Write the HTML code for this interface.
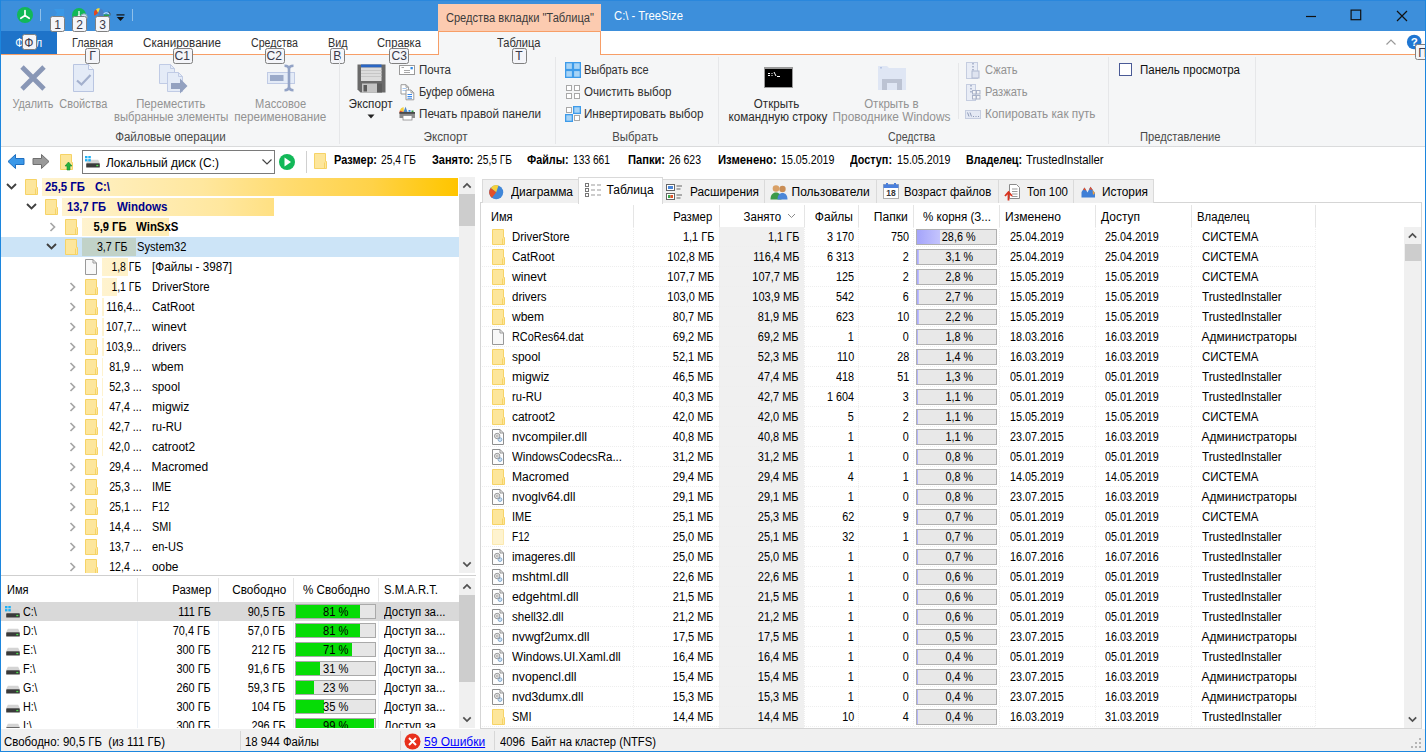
<!DOCTYPE html>
<html lang="ru"><head><meta charset="utf-8"><title>C:\ - TreeSize</title>
<style>
html,body{margin:0;padding:0;background:#fff;}
#app{position:relative;width:1426px;height:752px;overflow:hidden;font-family:"Liberation Sans", sans-serif;font-size:12px;background:#fff;}
#app div,#app svg,#app .t{position:absolute;box-sizing:border-box;}
.t{white-space:pre;line-height:16px;height:16px;}
</style></head>
<body>
<div id="app">
<div style="left:0px;top:0px;width:1426px;height:752px;background:#f0f0f0;"></div>
<div style="left:0px;top:0px;width:1426px;height:31px;background:#3d8fdb;"></div>
<div style="left:0px;top:0px;width:1426px;height:1px;background:#2a87dc;"></div>
<div style="left:1px;top:31px;width:1424px;height:24px;background:#fff;"></div>
<div style="left:1px;top:31px;width:56px;height:23px;background:#1e73c9;"></div>
<div style="left:1px;top:54px;width:1424px;height:1px;background:#f79e67;"></div>
<div style="left:1px;top:55px;width:1424px;height:91px;background:#f5f6f7;"></div>
<div style="left:1px;top:146px;width:1424px;height:1px;background:#dadbdc;"></div>
<div style="left:438px;top:4px;width:163px;height:28px;background:#fccbb0;"></div>
<div style="left:438px;top:31px;width:163px;height:24px;background:#f5f6f7;border:1px solid #f79e67;border-bottom:none;"></div>
<span class="t" style="top:10.00px;font-size:12px;color:#3b3b3b;left:439.60px;transform:scaleX(0.9262);transform-origin:50% 50%;">Средства вкладки &quot;Таблица&quot;</span>
<span class="t" style="top:8.00px;font-size:13px;color:#fff;left:614.00px;transform:scaleX(0.8683);transform-origin:0 50%;">C:\ - TreeSize</span>
<svg style="left:16px;top:6px" width="18" height="18" viewBox="0 0 18 18"><circle cx="9" cy="9" r="8" fill="#12b858"/><path d="M9 4.5V9.5M9 9.5L4.8 12.3M9 9.5L13.2 12.3" stroke="#fff" stroke-width="1.7" stroke-linecap="round" fill="none"/></svg>
<div style="left:40px;top:9px;width:1px;height:12px;background:#8fc0ea;"></div>
<div style="left:132px;top:9px;width:1px;height:12px;background:#8fc0ea;"></div>
<svg style="left:50px;top:8px" width="16" height="12" viewBox="0 0 16 12"><path d="M4 1H14V9H4L7 5Z" fill="#3a9ae8" opacity="0.85"/></svg>
<svg style="left:71px;top:7px" width="18" height="16" viewBox="0 0 18 16"><circle cx="8" cy="8" r="7" fill="#12b858"/><path d="M8 4V8.5M8 8.5L4.5 11M8 8.5L11.5 11" stroke="#fff" stroke-width="1.3" fill="none"/><circle cx="13" cy="10" r="3.2" fill="#cfe3f5" stroke="#8aa" stroke-width="1"/></svg>
<svg style="left:94px;top:7px" width="18" height="14" viewBox="0 0 18 14"><path d="M4 6L2 2.4A4.3 4.3 0 0 1 5.9 1.4Z" fill="#f6dc3a"/><path d="M4 6L0.7 8.8A4.3 4.3 0 0 1 2 2.4Z" fill="#e2481e"/><path d="M4.6 6.2L6.4 1.6A4.8 4.8 0 0 1 8.8 9H4.6Z" fill="#4b7fc4"/><path d="M9.2 7.4A3.4 3.4 0 0 1 15.8 7.4Z" fill="#2f8ae6"/><path d="M9.2 7.4H15.8A3.4 3.4 0 0 1 9.2 7.4Z" fill="#2e9e44"/><path d="M9.5 6.8C11.5 5.2 14 5.5 15.5 7.5" stroke="#fff" stroke-width="0.9" fill="none"/><path d="M14.5 4.6A3.6 3.6 0 0 1 16 8.5" stroke="#555" stroke-width="1" fill="none"/></svg>
<svg style="left:116px;top:13.5px" width="9" height="8" viewBox="0 0 9 8"><rect x="0.5" y="0.3" width="8" height="1.2" fill="#111"/><path d="M0.8 3H8.2L4.5 7Z" fill="#111"/></svg>
<div style="left:50px;top:16.2px;width:15.4px;height:16.3px;background:#f4f5f9;border:1px solid #808080;border-radius:2.5px;"></div>
<span class="t" style="top:16.50px;font-size:13px;color:#3a3a4a;left:54.08px;transform:scaleX(0.9300);transform-origin:50% 50%;">1</span>
<div style="left:72px;top:16.2px;width:15.4px;height:16.3px;background:#f4f5f9;border:1px solid #808080;border-radius:2.5px;"></div>
<span class="t" style="top:16.50px;font-size:13px;color:#3a3a4a;left:76.08px;transform:scaleX(0.9300);transform-origin:50% 50%;">2</span>
<div style="left:94.5px;top:16.2px;width:15.4px;height:16.3px;background:#f4f5f9;border:1px solid #808080;border-radius:2.5px;"></div>
<span class="t" style="top:16.50px;font-size:13px;color:#3a3a4a;left:98.58px;transform:scaleX(0.9300);transform-origin:50% 50%;">3</span>
<svg style="left:1305px;top:10px" width="12" height="12" viewBox="0 0 12 12"><path d="M1 6.5H11" stroke="#111" stroke-width="1.2"/></svg>
<svg style="left:1350px;top:9px" width="12" height="12" viewBox="0 0 12 12"><rect x="1.1" y="1.1" width="9.6" height="9.6" fill="none" stroke="#111" stroke-width="1.2"/></svg>
<svg style="left:1396px;top:10px" width="12" height="12" viewBox="0 0 12 12"><path d="M1 1L11 11M11 1L1 11" stroke="#111" stroke-width="1.2"/></svg>
<span class="t" style="top:35.00px;font-size:12px;color:#fff;left:14.24px;transform:scaleX(0.9148);transform-origin:50% 50%;">Файл</span>
<span class="t" style="top:35.00px;font-size:12px;color:#303030;left:71.60px;transform:scaleX(0.8974);transform-origin:0 50%;">Главная</span>
<span class="t" style="top:35.00px;font-size:12px;color:#303030;left:142.50px;transform:scaleX(0.9695);transform-origin:0 50%;">Сканирование</span>
<span class="t" style="top:35.00px;font-size:12px;color:#303030;left:250.50px;transform:scaleX(0.8839);transform-origin:0 50%;">Средства</span>
<span class="t" style="top:35.00px;font-size:12px;color:#303030;left:327.50px;transform:scaleX(0.8978);transform-origin:0 50%;">Вид</span>
<span class="t" style="top:35.00px;font-size:12px;color:#303030;left:376.50px;transform:scaleX(0.9346);transform-origin:0 50%;">Справка</span>
<span class="t" style="top:35.00px;font-size:12px;color:#303030;left:497.00px;transform:scaleX(0.9243);transform-origin:0 50%;">Таблица</span>
<div style="left:21.5px;top:34.2px;width:15.4px;height:16.3px;background:#f4f5f9;border:1px solid #808080;border-radius:2.5px;"></div>
<span class="t" style="top:34.50px;font-size:13px;color:#3a3a4a;left:24.25px;transform:scaleX(0.9300);transform-origin:50% 50%;">Ф</span>
<div style="left:84.5px;top:47.7px;width:15.4px;height:16.3px;background:#f4f5f9;border:1px solid #808080;border-radius:2.5px;"></div>
<span class="t" style="top:48.00px;font-size:13px;color:#3a3a4a;left:88.68px;transform:scaleX(0.9300);transform-origin:50% 50%;">Г</span>
<div style="left:172.5px;top:47.7px;width:20.4px;height:16.3px;background:#f4f5f9;border:1px solid #808080;border-radius:2.5px;"></div>
<span class="t" style="top:48.00px;font-size:13px;color:#3a3a4a;left:174.39px;transform:scaleX(0.9300);transform-origin:50% 50%;">С1</span>
<div style="left:264.5px;top:47.7px;width:20.4px;height:16.3px;background:#f4f5f9;border:1px solid #808080;border-radius:2.5px;"></div>
<span class="t" style="top:48.00px;font-size:13px;color:#3a3a4a;left:266.39px;transform:scaleX(0.9300);transform-origin:50% 50%;">С2</span>
<div style="left:329.5px;top:47.7px;width:15.4px;height:16.3px;background:#f4f5f9;border:1px solid #808080;border-radius:2.5px;"></div>
<span class="t" style="top:48.00px;font-size:13px;color:#3a3a4a;left:332.86px;transform:scaleX(0.9300);transform-origin:50% 50%;">В</span>
<div style="left:389px;top:47.7px;width:20.4px;height:16.3px;background:#f4f5f9;border:1px solid #808080;border-radius:2.5px;"></div>
<span class="t" style="top:48.00px;font-size:13px;color:#3a3a4a;left:390.89px;transform:scaleX(0.9300);transform-origin:50% 50%;">С3</span>
<div style="left:511.5px;top:47.7px;width:15.4px;height:16.3px;background:#f4f5f9;border:1px solid #808080;border-radius:2.5px;"></div>
<span class="t" style="top:48.00px;font-size:13px;color:#3a3a4a;left:515.22px;transform:scaleX(0.9300);transform-origin:50% 50%;">Т</span>
<svg style="left:1385px;top:38px" width="12" height="8" viewBox="0 0 12 8"><path d="M1.5 6.5L6 2L10.5 6.5" stroke="#9a9a9a" stroke-width="1.2" fill="none"/></svg>
<svg style="left:1406px;top:33.5px" width="17" height="17" viewBox="0 0 17 17"><circle cx="8.2" cy="8" r="7.3" fill="#1f76d2"/><text x="8.2" y="12.2" font-size="11.5" font-weight="bold" fill="#fff" text-anchor="middle" font-family="Liberation Sans, sans-serif">?</text></svg>
<div style="left:1415px;top:44.2px;width:15.4px;height:16.3px;background:#f4f5f9;border:1px solid #808080;border-radius:2.5px;"></div>
<span class="t" style="top:44.50px;font-size:13px;color:#3a3a4a;left:1418.03px;transform:scaleX(0.9300);transform-origin:50% 50%;">П</span>
<div style="left:339px;top:57px;width:1px;height:87px;background:#e6e7e9;"></div>
<div style="left:555px;top:57px;width:1px;height:87px;background:#e6e7e9;"></div>
<div style="left:718px;top:57px;width:1px;height:87px;background:#e6e7e9;"></div>
<div style="left:1108px;top:57px;width:1px;height:87px;background:#e6e7e9;"></div>
<div style="left:1255px;top:57px;width:1px;height:87px;background:#e6e7e9;"></div>
<div style="left:958px;top:63px;width:1px;height:56px;background:#e6e7e9;"></div>
<span class="t" style="top:129.00px;font-size:12px;color:#4a4a4a;left:112.60px;transform:scaleX(0.9626);transform-origin:50% 50%;">Файловые операции</span>
<span class="t" style="top:129.00px;font-size:12px;color:#4a4a4a;left:423.45px;transform:scaleX(0.9757);transform-origin:50% 50%;">Экспорт</span>
<span class="t" style="top:129.00px;font-size:12px;color:#4a4a4a;left:610.83px;transform:scaleX(0.9515);transform-origin:50% 50%;">Выбрать</span>
<span class="t" style="top:129.00px;font-size:12px;color:#4a4a4a;left:884.91px;transform:scaleX(0.8839);transform-origin:50% 50%;">Средства</span>
<span class="t" style="top:129.00px;font-size:12px;color:#4a4a4a;left:1137.03px;transform:scaleX(0.9303);transform-origin:50% 50%;">Представление</span>
<svg style="left:19px;top:64px" width="28" height="28" viewBox="0 0 28 28"><path d="M3 3L25 25M25 3L3 25" stroke="#8997b6" stroke-width="4.8"/></svg>
<span class="t" style="top:96.30px;font-size:12px;color:#929292;left:10.09px;transform:scaleX(0.8946);transform-origin:50% 50%;">Удалить</span>
<svg style="left:71px;top:63px" width="25" height="30" viewBox="0 0 25 30"><path d="M2.5 1.5H17.5L22.5 6.5V28.5H2.5Z" fill="#e4ebf7" stroke="#b9c5e1" stroke-width="1"/><path d="M17.5 1.5V6.5H22.5" fill="#f4f6fb" stroke="#b9c5e1" stroke-width="1"/><path d="M6 17.5L10.5 21.5L19.5 12" stroke="#a3b0cd" stroke-width="2.2" fill="none"/></svg>
<span class="t" style="top:96.30px;font-size:12px;color:#929292;left:57.15px;transform:scaleX(0.9108);transform-origin:50% 50%;">Свойства</span>
<svg style="left:158px;top:63px" width="32" height="32" viewBox="0 0 32 32"><path d="M1.5 1.5H12.5L16.5 5.5V20.5H1.5Z" fill="#e4ebf7" stroke="#c0cbe5"/><path d="M12.5 1.5V5.5H16.5" fill="none" stroke="#c0cbe5"/><path d="M9.5 9.5H20.5L24.5 13.5V28.5H9.5Z" fill="#e4ebf7" stroke="#c0cbe5"/><path d="M20.5 9.5V13.5H24.5" fill="none" stroke="#c0cbe5"/><path d="M13 20H22V15.5L29.5 23L22 30.5V26H13Z" fill="#93a1c0"/></svg>
<span class="t" style="top:96.30px;font-size:12px;color:#929292;left:134.23px;transform:scaleX(0.9384);transform-origin:50% 50%;">Переместить</span>
<span class="t" style="top:109.30px;font-size:12px;color:#929292;left:109.84px;transform:scaleX(0.9360);transform-origin:50% 50%;">выбранные элементы</span>
<svg style="left:265px;top:63px" width="32" height="30" viewBox="0 0 32 30"><rect x="2.5" y="9.5" width="27" height="11" fill="#e4ebf7" stroke="#c0cbe5"/><rect x="5" y="12" width="13.5" height="6" fill="#9baac9"/><path d="M19.5 2.8C22.5 2.8 24 4 24 6.5V23.5C24 26 22.5 27.2 19.5 27.2M28.5 2.8C25.5 2.8 24 4 24 6.5M24 23.5C24 26 25.5 27.2 28.5 27.2" stroke="#93a3c6" stroke-width="2.6" fill="none"/></svg>
<span class="t" style="top:96.30px;font-size:12px;color:#929292;left:252.90px;transform:scaleX(0.9239);transform-origin:50% 50%;">Массовое</span>
<span class="t" style="top:109.30px;font-size:12px;color:#929292;left:233.31px;transform:scaleX(0.9748);transform-origin:50% 50%;">переименование</span>
<svg style="left:356.5px;top:63.7px" width="29" height="29" viewBox="0 0 29 29"><path d="M0.5 0.5H28.5V28.5H3.5L0.5 25.5Z" fill="#6a6a6a"/><rect x="4" y="0.5" width="20.5" height="3" fill="#2a66c4"/><rect x="4" y="3.5" width="20.5" height="13.5" fill="#dcdcdc"/><path d="M4 6.5H24.5M4 9.5H24.5M4 12.5H24.5" stroke="#c6c6c6" stroke-width="1"/><rect x="5" y="19.5" width="15" height="9" fill="#c4c4c4"/><rect x="6.5" y="21" width="3.5" height="6.5" fill="#5a5a5a"/><rect x="20" y="19.5" width="5" height="9" fill="#5c5c5c"/></svg>
<span class="t" style="top:96.30px;font-size:12px;color:#2b2b2b;left:348.45px;transform:scaleX(0.9757);transform-origin:50% 50%;">Экспорт</span>
<svg style="left:367px;top:114px" width="8" height="5" viewBox="0 0 8 5"><path d="M0.5 0.5H7.5L4 4.5Z" fill="#222"/></svg>
<svg style="left:399px;top:65px" width="17" height="11" viewBox="0 0 17 11"><rect x="0.5" y="0.5" width="15" height="9" fill="#fff" stroke="#9a9a9a"/><path d="M2.5 2.5H5M5 5.5H11M5 7.5H11" stroke="#a8a8a8"/><rect x="11.5" y="2" width="2.3" height="2.3" fill="#2f8ae6"/></svg>
<span class="t" style="top:62.00px;font-size:12px;color:#303030;left:418.50px;transform:scaleX(0.9602);transform-origin:0 50%;">Почта</span>
<svg style="left:399.5px;top:83.7px" width="16" height="17" viewBox="0 0 16 17"><path d="M1 0.7H6L8.5 3.2V10H1Z" fill="#fff" stroke="#9a9a9a"/><path d="M6 0.7V3.2H8.5" fill="none" stroke="#9a9a9a"/><path d="M2.5 4.5H6.5M2.5 6.5H6.5" stroke="#a9c8ee"/><path d="M6 6H11L13.8 8.8V15.8H6Z" fill="#fff" stroke="#9a9a9a"/><path d="M11 6V8.8H13.8" fill="none" stroke="#9a9a9a"/><path d="M7.5 10.5H12M7.5 12.5H12M7.5 14.2H12" stroke="#3f8ae8"/></svg>
<span class="t" style="top:84.00px;font-size:12px;color:#303030;left:418.50px;transform:scaleX(0.9258);transform-origin:0 50%;">Буфер обмена</span>
<svg style="left:399px;top:106px" width="17" height="15" viewBox="0 0 17 15"><path d="M4.5 1A4.8 4.8 0 0 0 0.8 4.5L5 6Z" fill="#f4d03f"/><path d="M0.8 4.5A4.8 4.8 0 0 0 2 9.5L5 6Z" fill="#e2502a"/><path d="M6.5 0.8L9.5 8.5H3.5Z" fill="#4c86c6"/><rect x="0.5" y="6.5" width="15.5" height="5.5" fill="#8c8c8c"/><rect x="0.5" y="6" width="15.5" height="1.8" fill="#4a4a4a"/><rect x="9.5" y="4" width="2" height="1.8" fill="#2f8ae6"/><rect x="12.5" y="4.5" width="2" height="1.5" fill="#2e9e44"/><rect x="4" y="9.5" width="9" height="4.5" fill="#fff" stroke="#8a8a8a" stroke-width="0.8"/></svg>
<span class="t" style="top:106.00px;font-size:12px;color:#303030;left:418.50px;transform:scaleX(0.9742);transform-origin:0 50%;">Печать правой панели</span>
<svg style="left:565px;top:62px" width="16" height="16" viewBox="0 0 16 16"><rect x="0" y="0" width="16" height="16" fill="#3d9bea"/><rect x="1.3" y="1.3" width="5.6" height="5.6" fill="#a8d4f6"/><rect x="9.1" y="1.3" width="5.6" height="5.6" fill="#a8d4f6"/><rect x="1.3" y="9.1" width="5.6" height="5.6" fill="#a8d4f6"/><rect x="9.1" y="9.1" width="5.6" height="5.6" fill="#a8d4f6"/></svg>
<span class="t" style="top:62.00px;font-size:12px;color:#303030;left:584.30px;transform:scaleX(0.9137);transform-origin:0 50%;">Выбрать все</span>
<svg style="left:565px;top:84px" width="16" height="16" viewBox="0 0 16 16"><g fill="#fff" stroke="#a8a8a8"><rect x="1.5" y="1.5" width="5" height="5"/><rect x="9.5" y="1.5" width="5" height="5"/><rect x="1.5" y="9.5" width="5" height="5"/><rect x="9.5" y="9.5" width="5" height="5"/></g></svg>
<span class="t" style="top:84.00px;font-size:12px;color:#303030;left:584.30px;transform:scaleX(0.9637);transform-origin:0 50%;">Очистить выбор</span>
<svg style="left:565px;top:106px" width="16" height="16" viewBox="0 0 16 16"><g fill="#fff" stroke="#a8a8a8"><rect x="1.5" y="1.5" width="5" height="5"/><rect x="9.5" y="9.5" width="5" height="5"/></g><rect x="8" y="0" width="8" height="8" fill="#3d9bea"/><rect x="9.3" y="1.3" width="5.4" height="5.4" fill="#a8d4f6"/><rect x="0" y="8" width="8" height="8" fill="#3d9bea"/><rect x="1.3" y="9.3" width="5.4" height="5.4" fill="#a8d4f6"/></svg>
<span class="t" style="top:106.00px;font-size:12px;color:#303030;left:584.30px;transform:scaleX(0.9709);transform-origin:0 50%;">Инвертировать выбор</span>
<svg style="left:764px;top:67px" width="29" height="21" viewBox="0 0 29 21"><rect x="0" y="0" width="29" height="21" fill="#9a9a9a"/><rect x="1" y="2" width="27" height="18" fill="#000"/><path d="M4 6.5H6M4 8.5H6M7.5 6.5H8.5M7.5 8.5H8.5M10 5L12 9M13 9.5H16" stroke="#fff" stroke-width="1"/></svg>
<span class="t" style="top:96.30px;font-size:12px;color:#2b2b2b;left:753.43px;transform:scaleX(0.9652);transform-origin:50% 50%;">Открыть</span>
<span class="t" style="top:109.30px;font-size:12px;color:#2b2b2b;left:726.59px;transform:scaleX(0.9724);transform-origin:50% 50%;">командную строку</span>
<svg style="left:877px;top:65px" width="30" height="26" viewBox="0 0 30 26"><path d="M1 1H10L12 3H29V25H1Z" fill="#dfe6f4"/><rect x="3" y="2" width="2" height="1.5" fill="#b8c6e4"/><path d="M5 25V14H25V25H20V18H10V25Z" fill="#bcc3d3"/></svg>
<span class="t" style="top:96.30px;font-size:12px;color:#929292;left:863.33px;transform:scaleX(0.9588);transform-origin:50% 50%;">Открыть в</span>
<span class="t" style="top:109.30px;font-size:12px;color:#929292;left:832.08px;transform:scaleX(0.9913);transform-origin:50% 50%;">Проводнике Windows</span>
<svg style="left:966px;top:62px" width="14" height="17" viewBox="0 0 14 17"><rect x="0.5" y="0.5" width="11" height="16" fill="#e9edf6" stroke="#c5cde0"/><path d="M7 1V12" stroke="#b0b9d0" stroke-width="2" stroke-dasharray="1.5 1.5"/><rect x="6" y="9" width="7" height="7" fill="#dfe4f0" stroke="#b0b9d0"/></svg>
<span class="t" style="top:62.00px;font-size:12px;color:#929292;left:984.50px;transform:scaleX(0.9253);transform-origin:0 50%;">Сжать</span>
<svg style="left:966px;top:84px" width="15" height="17" viewBox="0 0 15 17"><rect x="0.5" y="0.5" width="9" height="16" fill="#e9edf6" stroke="#c5cde0"/><path d="M5 1V9" stroke="#b0b9d0" stroke-width="2" stroke-dasharray="1.5 1.5"/><rect x="6.5" y="6.5" width="3.5" height="3.5" fill="#f5f6f7" stroke="#aab3c8"/><rect x="10.5" y="6.5" width="3.5" height="3.5" fill="#f5f6f7" stroke="#aab3c8"/><rect x="6.5" y="11.5" width="3.5" height="3.5" fill="#f5f6f7" stroke="#aab3c8"/><rect x="10.5" y="11.5" width="3.5" height="3.5" fill="#f5f6f7" stroke="#aab3c8"/></svg>
<span class="t" style="top:84.00px;font-size:12px;color:#929292;left:984.50px;transform:scaleX(0.9271);transform-origin:0 50%;">Разжать</span>
<svg style="left:965px;top:110px" width="16" height="9" viewBox="0 0 16 9"><rect x="0.5" y="0.5" width="15" height="8" fill="#e4e9f4" stroke="#c5cde0"/><path d="M2.5 2.5L4 6.5M5 2.5L6.5 6.5M8 6.5H9M10.5 6.5H11.5M13 6.5H14" stroke="#8f9bb8" stroke-width="1"/></svg>
<span class="t" style="top:106.00px;font-size:12px;color:#929292;left:984.50px;transform:scaleX(0.9781);transform-origin:0 50%;">Копировать как путь</span>
<div style="left:1119px;top:63px;width:13px;height:13px;background:#fff;border:1px solid #4a5a96;"></div>
<span class="t" style="top:62.00px;font-size:12px;color:#111;left:1139.50px;transform:scaleX(0.9602);transform-origin:0 50%;">Панель просмотра</span>
<div style="left:1px;top:147px;width:1424px;height:582px;background:#fff;"></div>
<svg style="left:7px;top:153px" width="18" height="17" viewBox="0 0 18 17"><path d="M1 8.5L8.5 1.5V5.5H17V11.5H8.5V15.5Z" fill="#3b98e8" stroke="#1f6fc0" stroke-width="1"/></svg>
<svg style="left:32px;top:153px" width="18" height="17" viewBox="0 0 18 17"><path d="M17 8.5L9.5 1.5V5.5H1V11.5H9.5V15.5Z" fill="#9a9a9a" stroke="#6f6f6f" stroke-width="1"/></svg>
<svg style="left:60px;top:154px" width="13" height="17" viewBox="0 0 13 17"><path d="M0.5 0.5H11.5V8.5H12.5V15.5H0.5Z" fill="#fde69b" stroke="#f6d366"/><path d="M8.5 8L12 12H10V16H7V12H5Z" fill="#27b13c" stroke="#1a8a2b" stroke-width="0.6"/></svg>
<div style="left:82px;top:150px;width:193px;height:24px;background:#fff;border:1px solid #7a7a7a;"></div>
<svg style="left:85px;top:156px" width="16" height="12" viewBox="0 0 16 12"><path d="M1.2 7.3L2.8 3.8H13.2L14.8 7.3Z" fill="#d4d4d4"/><rect x="1.2" y="7.3" width="13.6" height="4.2" rx="0.6" fill="#3a3a3a"/><rect x="11.3" y="8.9" width="2" height="1.3" fill="#4ee04e"/><g fill="#1eb0f5"><rect x="0" y="0" width="2.5" height="2.3"/><rect x="3.3" y="0" width="2.5" height="2.3"/><rect x="0" y="3.1" width="2.5" height="2.3"/><rect x="3.3" y="3.1" width="2.5" height="2.3"/></g></svg>
<span class="t" style="top:154.50px;font-size:12px;color:#000;left:106.00px;transform:scaleX(0.9950);transform-origin:0 50%;">Локальный диск (C:)</span>
<svg style="left:261px;top:158px" width="12" height="8" viewBox="0 0 12 8"><path d="M1.5 1.5L6 6L10.5 1.5" stroke="#444" stroke-width="1.2" fill="none"/></svg>
<svg style="left:278px;top:153px" width="18" height="18" viewBox="0 0 18 18"><circle cx="9" cy="9" r="8" fill="#12b858"/><path d="M6.5 4.5L13 9L6.5 13.5Z" fill="#fff"/></svg>
<div style="left:306px;top:151px;width:1px;height:22px;background:#d0d0d0;"></div>
<svg style="left:314px;top:153px" width="13" height="16" viewBox="0 0 13 16"><path d="M0.5 0.5H11.5V8.5H12.5V15.5H0.5Z" fill="#fde69b" stroke="#f6d366"/><path d="M10.5 9.5V15" stroke="#f6d366"/></svg>
<span class="t" style="top:152.30px;font-size:12px;color:#000;font-weight:bold;left:334.20px;transform:scaleX(0.9107);transform-origin:0 50%;">Размер:</span>
<span class="t" style="top:152.30px;font-size:12px;color:#000;left:381.40px;transform:scaleX(0.8524);transform-origin:0 50%;">25,4 ГБ</span>
<span class="t" style="top:152.30px;font-size:12px;color:#000;font-weight:bold;left:431.80px;transform:scaleX(0.9121);transform-origin:0 50%;">Занято:</span>
<span class="t" style="top:152.30px;font-size:12px;color:#000;left:477.00px;transform:scaleX(0.8524);transform-origin:0 50%;">25,5 ГБ</span>
<span class="t" style="top:152.30px;font-size:12px;color:#000;font-weight:bold;left:527.20px;transform:scaleX(0.8988);transform-origin:0 50%;">Файлы:</span>
<span class="t" style="top:152.30px;font-size:12px;color:#000;left:572.70px;transform:scaleX(0.8527);transform-origin:0 50%;">133 661</span>
<span class="t" style="top:152.30px;font-size:12px;color:#000;font-weight:bold;left:627.50px;transform:scaleX(0.9264);transform-origin:0 50%;">Папки:</span>
<span class="t" style="top:152.30px;font-size:12px;color:#000;left:668.60px;transform:scaleX(0.8719);transform-origin:0 50%;">26 623</span>
<span class="t" style="top:152.30px;font-size:12px;color:#000;font-weight:bold;left:717.70px;transform:scaleX(0.9416);transform-origin:0 50%;">Изменено:</span>
<span class="t" style="top:152.30px;font-size:12px;color:#000;left:780.60px;transform:scaleX(0.8907);transform-origin:0 50%;">15.05.2019</span>
<span class="t" style="top:152.30px;font-size:12px;color:#000;font-weight:bold;left:850.20px;transform:scaleX(0.9005);transform-origin:0 50%;">Доступ:</span>
<span class="t" style="top:152.30px;font-size:12px;color:#000;left:896.60px;transform:scaleX(0.8907);transform-origin:0 50%;">15.05.2019</span>
<span class="t" style="top:152.30px;font-size:12px;color:#000;font-weight:bold;left:966.20px;transform:scaleX(0.8922);transform-origin:0 50%;">Владелец:</span>
<span class="t" style="top:152.30px;font-size:12px;color:#000;left:1026.00px;transform:scaleX(0.9433);transform-origin:0 50%;">TrustedInstaller</span>
<div style="left:1px;top:177px;width:458px;height:396px;background:#fff;overflow:hidden">
<div style="left:41px;top:1px;width:416px;height:18px;background:linear-gradient(90deg,#fff3cf 0px,#ffe79e 160px,#ffdb6e 250px,#ffd248 330px,#ffc80a 400px,#ffc400 416px) no-repeat;background-size:416px 18px;"></div>
<svg style="left:5px;top:5.5px" width="11" height="7" viewBox="0 0 11 7"><path d="M1 1L5.5 5.5L10 1" stroke="#404040" stroke-width="1.9" fill="none"/></svg>
<svg style="left:23.7px;top:2px" width="13" height="16" viewBox="0 0 13 16"><path d="M0.5 0.5H11.5V8.5H12.5V15.5H0.5Z" fill="#fde69b" stroke="#f6d366"/><path d="M10.5 9.5V15" stroke="#f6d366"/></svg>
<span class="t" style="top:1.50px;font-size:12px;color:#00008b;font-weight:bold;left:44.00px;transform:scaleX(0.9496);transform-origin:0 50%;">25,5 ГБ</span>
<span class="t" style="top:1.50px;font-size:12px;color:#00008b;font-weight:bold;left:94.00px;transform:scaleX(0.9375);transform-origin:0 50%;">C:\</span>
<div style="left:61px;top:21px;width:212px;height:18px;background:linear-gradient(90deg,#fff3cf 0px,#ffe79e 160px,#ffdb6e 250px,#ffd248 330px,#ffc80a 400px,#ffc400 416px) no-repeat;background-size:416px 18px;"></div>
<svg style="left:25px;top:25.5px" width="11" height="7" viewBox="0 0 11 7"><path d="M1 1L5.5 5.5L10 1" stroke="#404040" stroke-width="1.9" fill="none"/></svg>
<svg style="left:43.7px;top:22px" width="13" height="16" viewBox="0 0 13 16"><path d="M0.5 0.5H11.5V8.5H12.5V15.5H0.5Z" fill="#fde69b" stroke="#f6d366"/><path d="M10.5 9.5V15" stroke="#f6d366"/></svg>
<span class="t" style="top:21.50px;font-size:12px;color:#00008b;font-weight:bold;left:65.50px;transform:scaleX(0.9258);transform-origin:0 50%;">13,7 ГБ</span>
<span class="t" style="top:21.50px;font-size:12px;color:#00008b;font-weight:bold;left:115.50px;transform:scaleX(0.9608);transform-origin:0 50%;">Windows</span>
<div style="left:81px;top:41px;width:87px;height:18px;background:linear-gradient(90deg,#fff3cf 0px,#ffe79e 160px,#ffdb6e 250px,#ffd248 330px,#ffc80a 400px,#ffc400 416px) no-repeat;background-size:416px 18px;"></div>
<svg style="left:48px;top:44.5px" width="7" height="10" viewBox="0 0 7 10"><path d="M1.5 1L5.5 5L1.5 9" stroke="#a6a6a6" stroke-width="1.7" fill="none"/></svg>
<svg style="left:63.7px;top:42px" width="13" height="16" viewBox="0 0 13 16"><path d="M0.5 0.5H11.5V8.5H12.5V15.5H0.5Z" fill="#fde69b" stroke="#f6d366"/><path d="M10.5 9.5V15" stroke="#f6d366"/></svg>
<span class="t" style="top:41.50px;font-size:12px;color:#000;font-weight:bold;left:89.85px;transform:scaleX(0.9308);transform-origin:100% 50%;">5,9 ГБ</span>
<span class="t" style="top:41.50px;font-size:12px;color:#000;font-weight:bold;left:135.00px;transform:scaleX(0.9534);transform-origin:0 50%;">WinSxS</span>
<div style="left:0px;top:60px;width:458px;height:20px;background:#cce4f7;"></div>
<div style="left:81px;top:61px;width:54px;height:18px;background:#c1d2c8;"></div>
<svg style="left:45px;top:65.5px" width="11" height="7" viewBox="0 0 11 7"><path d="M1 1L5.5 5.5L10 1" stroke="#404040" stroke-width="1.9" fill="none"/></svg>
<svg style="left:63.7px;top:62px" width="13" height="16" viewBox="0 0 13 16"><path d="M0.5 0.5H11.5V8.5H12.5V15.5H0.5Z" fill="#fde69b" stroke="#f6d366"/><path d="M10.5 9.5V15" stroke="#f6d366"/></svg>
<span class="t" style="top:61.50px;font-size:12px;color:#000;left:91.91px;transform:scaleX(0.8869);transform-origin:100% 50%;">3,7 ГБ</span>
<span class="t" style="top:61.50px;font-size:12px;color:#000;left:136.00px;transform:scaleX(0.9277);transform-origin:0 50%;">System32</span>
<div style="left:101px;top:81px;width:26px;height:18px;background:linear-gradient(90deg,#fff3cf 0px,#ffe79e 160px,#ffdb6e 250px,#ffd248 330px,#ffc80a 400px,#ffc400 416px) no-repeat;background-size:416px 18px;"></div>
<svg style="left:83.7px;top:82px" width="13" height="16" viewBox="0 0 13 16"><path d="M0.5 0.5H8L11.5 4V15.5H0.5Z" fill="#f8f8f8" stroke="#999"/><path d="M8 0.5V4H11.5" fill="none" stroke="#999"/></svg>
<span class="t" style="top:81.50px;font-size:12px;color:#000;left:106.11px;transform:scaleX(0.8723);transform-origin:100% 50%;">1,8 ГБ</span>
<span class="t" style="top:81.50px;font-size:12px;color:#000;left:150.50px;transform:scaleX(0.9738);transform-origin:0 50%;">[Файлы - 3987]</span>
<div style="left:101px;top:101px;width:15px;height:18px;background:linear-gradient(90deg,#fff3cf 0px,#ffe79e 160px,#ffdb6e 250px,#ffd248 330px,#ffc80a 400px,#ffc400 416px) no-repeat;background-size:416px 18px;"></div>
<svg style="left:68px;top:104.5px" width="7" height="10" viewBox="0 0 7 10"><path d="M1.5 1L5.5 5L1.5 9" stroke="#a6a6a6" stroke-width="1.7" fill="none"/></svg>
<svg style="left:83.7px;top:102px" width="13" height="16" viewBox="0 0 13 16"><path d="M0.5 0.5H11.5V8.5H12.5V15.5H0.5Z" fill="#fde69b" stroke="#f6d366"/><path d="M10.5 9.5V15" stroke="#f6d366"/></svg>
<span class="t" style="top:101.50px;font-size:12px;color:#000;left:106.11px;transform:scaleX(0.8723);transform-origin:100% 50%;">1,1 ГБ</span>
<span class="t" style="top:101.50px;font-size:12px;color:#000;left:150.50px;transform:scaleX(0.9475);transform-origin:0 50%;">DriverStore</span>
<div style="left:101px;top:121px;width:1.5px;height:18px;background:linear-gradient(90deg,#fff3cf 0px,#ffe79e 160px,#ffdb6e 250px,#ffd248 330px,#ffc80a 400px,#ffc400 416px) no-repeat;background-size:416px 18px;"></div>
<svg style="left:68px;top:124.5px" width="7" height="10" viewBox="0 0 7 10"><path d="M1.5 1L5.5 5L1.5 9" stroke="#a6a6a6" stroke-width="1.7" fill="none"/></svg>
<svg style="left:83.7px;top:122px" width="13" height="16" viewBox="0 0 13 16"><path d="M0.5 0.5H11.5V8.5H12.5V15.5H0.5Z" fill="#fde69b" stroke="#f6d366"/><path d="M10.5 9.5V15" stroke="#f6d366"/></svg>
<span class="t" style="top:121.50px;font-size:12px;color:#000;left:101.36px;transform:scaleX(0.8942);transform-origin:100% 50%;">116,4...</span>
<span class="t" style="top:121.50px;font-size:12px;color:#000;left:150.50px;transform:scaleX(0.9652);transform-origin:0 50%;">CatRoot</span>
<div style="left:101px;top:141px;width:1.5px;height:18px;background:linear-gradient(90deg,#fff3cf 0px,#ffe79e 160px,#ffdb6e 250px,#ffd248 330px,#ffc80a 400px,#ffc400 416px) no-repeat;background-size:416px 18px;"></div>
<svg style="left:68px;top:144.5px" width="7" height="10" viewBox="0 0 7 10"><path d="M1.5 1L5.5 5L1.5 9" stroke="#a6a6a6" stroke-width="1.7" fill="none"/></svg>
<svg style="left:83.7px;top:142px" width="13" height="16" viewBox="0 0 13 16"><path d="M0.5 0.5H11.5V8.5H12.5V15.5H0.5Z" fill="#fde69b" stroke="#f6d366"/><path d="M10.5 9.5V15" stroke="#f6d366"/></svg>
<span class="t" style="top:141.50px;font-size:12px;color:#000;left:100.47px;transform:scaleX(0.8743);transform-origin:100% 50%;">107,7...</span>
<span class="t" style="top:141.50px;font-size:12px;color:#000;left:150.50px;transform:scaleX(1.0084);transform-origin:0 50%;">winevt</span>
<div style="left:101px;top:161px;width:1.5px;height:18px;background:linear-gradient(90deg,#fff3cf 0px,#ffe79e 160px,#ffdb6e 250px,#ffd248 330px,#ffc80a 400px,#ffc400 416px) no-repeat;background-size:416px 18px;"></div>
<svg style="left:68px;top:164.5px" width="7" height="10" viewBox="0 0 7 10"><path d="M1.5 1L5.5 5L1.5 9" stroke="#a6a6a6" stroke-width="1.7" fill="none"/></svg>
<svg style="left:83.7px;top:162px" width="13" height="16" viewBox="0 0 13 16"><path d="M0.5 0.5H11.5V8.5H12.5V15.5H0.5Z" fill="#fde69b" stroke="#f6d366"/><path d="M10.5 9.5V15" stroke="#f6d366"/></svg>
<span class="t" style="top:161.50px;font-size:12px;color:#000;left:100.47px;transform:scaleX(0.8743);transform-origin:100% 50%;">103,9...</span>
<span class="t" style="top:161.50px;font-size:12px;color:#000;left:150.50px;transform:scaleX(0.9524);transform-origin:0 50%;">drivers</span>
<div style="left:101px;top:181px;width:1.2px;height:18px;background:linear-gradient(90deg,#fff3cf 0px,#ffe79e 160px,#ffdb6e 250px,#ffd248 330px,#ffc80a 400px,#ffc400 416px) no-repeat;background-size:416px 18px;"></div>
<svg style="left:68px;top:184.5px" width="7" height="10" viewBox="0 0 7 10"><path d="M1.5 1L5.5 5L1.5 9" stroke="#a6a6a6" stroke-width="1.7" fill="none"/></svg>
<svg style="left:83.7px;top:182px" width="13" height="16" viewBox="0 0 13 16"><path d="M0.5 0.5H11.5V8.5H12.5V15.5H0.5Z" fill="#fde69b" stroke="#f6d366"/><path d="M10.5 9.5V15" stroke="#f6d366"/></svg>
<span class="t" style="top:181.50px;font-size:12px;color:#000;left:103.80px;transform:scaleX(0.8855);transform-origin:100% 50%;">81,9 ...</span>
<span class="t" style="top:181.50px;font-size:12px;color:#000;left:150.50px;transform:scaleX(0.9839);transform-origin:0 50%;">wbem</span>
<div style="left:101px;top:201px;width:1px;height:18px;background:linear-gradient(90deg,#fff3cf 0px,#ffe79e 160px,#ffdb6e 250px,#ffd248 330px,#ffc80a 400px,#ffc400 416px) no-repeat;background-size:416px 18px;"></div>
<svg style="left:68px;top:204.5px" width="7" height="10" viewBox="0 0 7 10"><path d="M1.5 1L5.5 5L1.5 9" stroke="#a6a6a6" stroke-width="1.7" fill="none"/></svg>
<svg style="left:83.7px;top:202px" width="13" height="16" viewBox="0 0 13 16"><path d="M0.5 0.5H11.5V8.5H12.5V15.5H0.5Z" fill="#fde69b" stroke="#f6d366"/><path d="M10.5 9.5V15" stroke="#f6d366"/></svg>
<span class="t" style="top:201.50px;font-size:12px;color:#000;left:103.80px;transform:scaleX(0.8855);transform-origin:100% 50%;">52,3 ...</span>
<span class="t" style="top:201.50px;font-size:12px;color:#000;left:150.50px;transform:scaleX(0.9760);transform-origin:0 50%;">spool</span>
<div style="left:101px;top:221px;width:1px;height:18px;background:linear-gradient(90deg,#fff3cf 0px,#ffe79e 160px,#ffdb6e 250px,#ffd248 330px,#ffc80a 400px,#ffc400 416px) no-repeat;background-size:416px 18px;"></div>
<svg style="left:68px;top:224.5px" width="7" height="10" viewBox="0 0 7 10"><path d="M1.5 1L5.5 5L1.5 9" stroke="#a6a6a6" stroke-width="1.7" fill="none"/></svg>
<svg style="left:83.7px;top:222px" width="13" height="16" viewBox="0 0 13 16"><path d="M0.5 0.5H11.5V8.5H12.5V15.5H0.5Z" fill="#fde69b" stroke="#f6d366"/><path d="M10.5 9.5V15" stroke="#f6d366"/></svg>
<span class="t" style="top:221.50px;font-size:12px;color:#000;left:103.80px;transform:scaleX(0.8855);transform-origin:100% 50%;">47,4 ...</span>
<span class="t" style="top:221.50px;font-size:12px;color:#000;left:150.50px;transform:scaleX(1.0171);transform-origin:0 50%;">migwiz</span>
<div style="left:101px;top:241px;width:1px;height:18px;background:linear-gradient(90deg,#fff3cf 0px,#ffe79e 160px,#ffdb6e 250px,#ffd248 330px,#ffc80a 400px,#ffc400 416px) no-repeat;background-size:416px 18px;"></div>
<svg style="left:68px;top:244.5px" width="7" height="10" viewBox="0 0 7 10"><path d="M1.5 1L5.5 5L1.5 9" stroke="#a6a6a6" stroke-width="1.7" fill="none"/></svg>
<svg style="left:83.7px;top:242px" width="13" height="16" viewBox="0 0 13 16"><path d="M0.5 0.5H11.5V8.5H12.5V15.5H0.5Z" fill="#fde69b" stroke="#f6d366"/><path d="M10.5 9.5V15" stroke="#f6d366"/></svg>
<span class="t" style="top:241.50px;font-size:12px;color:#000;left:103.80px;transform:scaleX(0.8855);transform-origin:100% 50%;">42,7 ...</span>
<span class="t" style="top:241.50px;font-size:12px;color:#000;left:150.50px;transform:scaleX(0.9375);transform-origin:0 50%;">ru-RU</span>
<div style="left:101px;top:261px;width:1px;height:18px;background:linear-gradient(90deg,#fff3cf 0px,#ffe79e 160px,#ffdb6e 250px,#ffd248 330px,#ffc80a 400px,#ffc400 416px) no-repeat;background-size:416px 18px;"></div>
<svg style="left:68px;top:264.5px" width="7" height="10" viewBox="0 0 7 10"><path d="M1.5 1L5.5 5L1.5 9" stroke="#a6a6a6" stroke-width="1.7" fill="none"/></svg>
<svg style="left:83.7px;top:262px" width="13" height="16" viewBox="0 0 13 16"><path d="M0.5 0.5H11.5V8.5H12.5V15.5H0.5Z" fill="#fde69b" stroke="#f6d366"/><path d="M10.5 9.5V15" stroke="#f6d366"/></svg>
<span class="t" style="top:261.50px;font-size:12px;color:#000;left:103.80px;transform:scaleX(0.8855);transform-origin:100% 50%;">42,0 ...</span>
<span class="t" style="top:261.50px;font-size:12px;color:#000;left:150.50px;transform:scaleX(0.9917);transform-origin:0 50%;">catroot2</span>
<svg style="left:68px;top:284.5px" width="7" height="10" viewBox="0 0 7 10"><path d="M1.5 1L5.5 5L1.5 9" stroke="#a6a6a6" stroke-width="1.7" fill="none"/></svg>
<svg style="left:83.7px;top:282px" width="13" height="16" viewBox="0 0 13 16"><path d="M0.5 0.5H11.5V8.5H12.5V15.5H0.5Z" fill="#fde69b" stroke="#f6d366"/><path d="M10.5 9.5V15" stroke="#f6d366"/></svg>
<span class="t" style="top:281.50px;font-size:12px;color:#000;left:103.80px;transform:scaleX(0.8855);transform-origin:100% 50%;">29,4 ...</span>
<span class="t" style="top:281.50px;font-size:12px;color:#000;left:150.50px;">Macromed</span>
<svg style="left:68px;top:304.5px" width="7" height="10" viewBox="0 0 7 10"><path d="M1.5 1L5.5 5L1.5 9" stroke="#a6a6a6" stroke-width="1.7" fill="none"/></svg>
<svg style="left:83.7px;top:302px" width="13" height="16" viewBox="0 0 13 16"><path d="M0.5 0.5H11.5V8.5H12.5V15.5H0.5Z" fill="#fde69b" stroke="#f6d366"/><path d="M10.5 9.5V15" stroke="#f6d366"/></svg>
<span class="t" style="top:301.50px;font-size:12px;color:#000;left:103.80px;transform:scaleX(0.8855);transform-origin:100% 50%;">25,3 ...</span>
<span class="t" style="top:301.50px;font-size:12px;color:#000;left:150.50px;transform:scaleX(0.9042);transform-origin:0 50%;">IME</span>
<svg style="left:68px;top:324.5px" width="7" height="10" viewBox="0 0 7 10"><path d="M1.5 1L5.5 5L1.5 9" stroke="#a6a6a6" stroke-width="1.7" fill="none"/></svg>
<svg style="left:83.7px;top:322px" width="13" height="16" viewBox="0 0 13 16"><path d="M0.5 0.5H11.5V8.5H12.5V15.5H0.5Z" fill="#fde69b" stroke="#f6d366"/><path d="M10.5 9.5V15" stroke="#f6d366"/></svg>
<span class="t" style="top:321.50px;font-size:12px;color:#000;left:103.80px;transform:scaleX(0.8855);transform-origin:100% 50%;">25,1 ...</span>
<span class="t" style="top:321.50px;font-size:12px;color:#000;left:150.50px;transform:scaleX(0.8363);transform-origin:0 50%;">F12</span>
<svg style="left:68px;top:344.5px" width="7" height="10" viewBox="0 0 7 10"><path d="M1.5 1L5.5 5L1.5 9" stroke="#a6a6a6" stroke-width="1.7" fill="none"/></svg>
<svg style="left:83.7px;top:342px" width="13" height="16" viewBox="0 0 13 16"><path d="M0.5 0.5H11.5V8.5H12.5V15.5H0.5Z" fill="#fde69b" stroke="#f6d366"/><path d="M10.5 9.5V15" stroke="#f6d366"/></svg>
<span class="t" style="top:341.50px;font-size:12px;color:#000;left:103.80px;transform:scaleX(0.8855);transform-origin:100% 50%;">14,4 ...</span>
<span class="t" style="top:341.50px;font-size:12px;color:#000;left:150.50px;transform:scaleX(0.9042);transform-origin:0 50%;">SMI</span>
<svg style="left:68px;top:364.5px" width="7" height="10" viewBox="0 0 7 10"><path d="M1.5 1L5.5 5L1.5 9" stroke="#a6a6a6" stroke-width="1.7" fill="none"/></svg>
<svg style="left:83.7px;top:362px" width="13" height="16" viewBox="0 0 13 16"><path d="M0.5 0.5H11.5V8.5H12.5V15.5H0.5Z" fill="#fde69b" stroke="#f6d366"/><path d="M10.5 9.5V15" stroke="#f6d366"/></svg>
<span class="t" style="top:361.50px;font-size:12px;color:#000;left:103.80px;transform:scaleX(0.8855);transform-origin:100% 50%;">13,7 ...</span>
<span class="t" style="top:361.50px;font-size:12px;color:#000;left:150.50px;transform:scaleX(0.9202);transform-origin:0 50%;">en-US</span>
<svg style="left:68px;top:384.5px" width="7" height="10" viewBox="0 0 7 10"><path d="M1.5 1L5.5 5L1.5 9" stroke="#a6a6a6" stroke-width="1.7" fill="none"/></svg>
<svg style="left:83.7px;top:382px" width="13" height="16" viewBox="0 0 13 16"><path d="M0.5 0.5H11.5V8.5H12.5V15.5H0.5Z" fill="#fde69b" stroke="#f6d366"/><path d="M10.5 9.5V15" stroke="#f6d366"/></svg>
<span class="t" style="top:381.50px;font-size:12px;color:#000;left:103.80px;transform:scaleX(0.8855);transform-origin:100% 50%;">12,4 ...</span>
<span class="t" style="top:381.50px;font-size:12px;color:#000;left:150.50px;transform:scaleX(0.9924);transform-origin:0 50%;">oobe</span>
</div>
<div style="left:459px;top:177px;width:16px;height:396px;background:#f0f0f0;"></div>
<svg style="left:459px;top:177px" width="16" height="17" viewBox="0 0 16 17"><path d="M4.3 10.7L8.0 7L11.7 10.7" stroke="#505050" stroke-width="1.7" fill="none"/></svg>
<svg style="left:459px;top:556px" width="16" height="17" viewBox="0 0 16 17"><path d="M4.3 6.3L8.0 10L11.7 6.3" stroke="#505050" stroke-width="1.7" fill="none"/></svg>
<div style="left:459px;top:194px;width:15.5px;height:32px;background:#cdcdcd;"></div>
<div style="left:1px;top:575px;width:475px;height:1px;background:#cfcfcf;"></div>
<div style="left:1px;top:578px;width:458px;height:150px;background:#fff;overflow:hidden">
<div style="left:136px;top:0px;width:1px;height:23px;background:#e5e5e5;"></div>
<div style="left:136px;top:23px;width:1px;height:130px;background:#edf1f6;"></div>
<div style="left:216.5px;top:0px;width:1px;height:23px;background:#e5e5e5;"></div>
<div style="left:216.5px;top:23px;width:1px;height:130px;background:#edf1f6;"></div>
<div style="left:291.5px;top:0px;width:1px;height:23px;background:#e5e5e5;"></div>
<div style="left:291.5px;top:23px;width:1px;height:130px;background:#edf1f6;"></div>
<div style="left:376.5px;top:0px;width:1px;height:23px;background:#e5e5e5;"></div>
<div style="left:376.5px;top:23px;width:1px;height:130px;background:#edf1f6;"></div>
<span class="t" style="top:4.00px;font-size:12px;color:#000;left:6.00px;transform:scaleX(0.9198);transform-origin:0 50%;">Имя</span>
<span class="t" style="top:4.00px;font-size:12px;color:#000;left:168.75px;transform:scaleX(0.9455);transform-origin:100% 50%;">Размер</span>
<span class="t" style="top:4.00px;font-size:12px;color:#000;left:230.33px;transform:scaleX(0.9788);transform-origin:100% 50%;">Свободно</span>
<span class="t" style="top:4.00px;font-size:12px;color:#000;left:301.50px;transform:scaleX(0.9686);transform-origin:0 50%;">% Свободно</span>
<span class="t" style="top:4.00px;font-size:12px;color:#000;left:383.00px;transform:scaleX(0.9417);transform-origin:0 50%;">S.M.A.R.T.</span>
<div style="left:0px;top:24px;width:458px;height:19px;background:#d9d9d9;"></div>
<svg style="left:4px;top:27.5px" width="16" height="12" viewBox="0 0 16 12"><path d="M1.2 7.3L2.8 3.8H13.2L14.8 7.3Z" fill="#d4d4d4"/><rect x="1.2" y="7.3" width="13.6" height="4.2" rx="0.6" fill="#3a3a3a"/><rect x="11.3" y="8.9" width="2" height="1.3" fill="#4ee04e"/><g fill="#1eb0f5"><rect x="0" y="0" width="2.5" height="2.3"/><rect x="3.3" y="0" width="2.5" height="2.3"/><rect x="0" y="3.1" width="2.5" height="2.3"/><rect x="3.3" y="3.1" width="2.5" height="2.3"/></g></svg>
<span class="t" style="top:25.50px;font-size:12px;color:#000;left:22.30px;transform:scaleX(0.9000);transform-origin:0 50%;">C:\</span>
<span class="t" style="top:25.50px;font-size:12px;color:#000;left:173.55px;transform:scaleX(0.9100);transform-origin:100% 50%;">111 ГБ</span>
<span class="t" style="top:25.50px;font-size:12px;color:#000;left:243.24px;transform:scaleX(0.9100);transform-origin:100% 50%;">90,5 ГБ</span>
<div style="left:294px;top:26px;width:81px;height:15px;background:#e6e6e6;border:1px solid #a9a9a9;"></div>
<div style="left:295px;top:27px;width:64px;height:13px;background:#06dc06;"></div>
<span class="t" style="top:25.50px;font-size:12px;color:#000;left:321.32px;transform:scaleX(0.9300);transform-origin:50% 50%;">81 %</span>
<span class="t" style="top:25.50px;font-size:12px;color:#000;left:383.00px;transform:scaleX(0.9523);transform-origin:0 50%;">Доступ за...</span>
<svg style="left:4px;top:46.5px" width="16" height="12" viewBox="0 0 16 12"><path d="M1.2 7.3L2.8 3.8H13.2L14.8 7.3Z" fill="#d4d4d4"/><rect x="1.2" y="7.3" width="13.6" height="4.2" rx="0.6" fill="#3a3a3a"/><rect x="11.3" y="8.9" width="2" height="1.3" fill="#4ee04e"/></svg>
<span class="t" style="top:44.50px;font-size:12px;color:#000;left:22.30px;transform:scaleX(0.9000);transform-origin:0 50%;">D:\</span>
<span class="t" style="top:44.50px;font-size:12px;color:#000;left:168.44px;transform:scaleX(0.9100);transform-origin:100% 50%;">70,4 ГБ</span>
<span class="t" style="top:44.50px;font-size:12px;color:#000;left:243.24px;transform:scaleX(0.9100);transform-origin:100% 50%;">57,0 ГБ</span>
<div style="left:294px;top:45px;width:81px;height:15px;background:#e6e6e6;border:1px solid #a9a9a9;"></div>
<div style="left:295px;top:46px;width:64px;height:13px;background:#06dc06;"></div>
<span class="t" style="top:44.50px;font-size:12px;color:#000;left:321.32px;transform:scaleX(0.9300);transform-origin:50% 50%;">81 %</span>
<span class="t" style="top:44.50px;font-size:12px;color:#000;left:383.00px;transform:scaleX(0.9523);transform-origin:0 50%;">Доступ за...</span>
<svg style="left:4px;top:65.5px" width="16" height="12" viewBox="0 0 16 12"><path d="M1.2 7.3L2.8 3.8H13.2L14.8 7.3Z" fill="#d4d4d4"/><rect x="1.2" y="7.3" width="13.6" height="4.2" rx="0.6" fill="#3a3a3a"/><rect x="11.3" y="8.9" width="2" height="1.3" fill="#4ee04e"/></svg>
<span class="t" style="top:63.50px;font-size:12px;color:#000;left:22.30px;transform:scaleX(0.9000);transform-origin:0 50%;">E:\</span>
<span class="t" style="top:63.50px;font-size:12px;color:#000;left:171.77px;transform:scaleX(0.9100);transform-origin:100% 50%;">300 ГБ</span>
<span class="t" style="top:63.50px;font-size:12px;color:#000;left:246.57px;transform:scaleX(0.9100);transform-origin:100% 50%;">212 ГБ</span>
<div style="left:294px;top:64px;width:81px;height:15px;background:#e6e6e6;border:1px solid #a9a9a9;"></div>
<div style="left:295px;top:65px;width:56px;height:13px;background:#06dc06;"></div>
<span class="t" style="top:63.50px;font-size:12px;color:#000;left:321.32px;transform:scaleX(0.9300);transform-origin:50% 50%;">71 %</span>
<span class="t" style="top:63.50px;font-size:12px;color:#000;left:383.00px;transform:scaleX(0.9523);transform-origin:0 50%;">Доступ за...</span>
<svg style="left:4px;top:84.5px" width="16" height="12" viewBox="0 0 16 12"><path d="M1.2 7.3L2.8 3.8H13.2L14.8 7.3Z" fill="#d4d4d4"/><rect x="1.2" y="7.3" width="13.6" height="4.2" rx="0.6" fill="#3a3a3a"/><rect x="11.3" y="8.9" width="2" height="1.3" fill="#4ee04e"/></svg>
<span class="t" style="top:82.50px;font-size:12px;color:#000;left:22.30px;transform:scaleX(0.9000);transform-origin:0 50%;">F:\</span>
<span class="t" style="top:82.50px;font-size:12px;color:#000;left:171.77px;transform:scaleX(0.9100);transform-origin:100% 50%;">300 ГБ</span>
<span class="t" style="top:82.50px;font-size:12px;color:#000;left:243.24px;transform:scaleX(0.9100);transform-origin:100% 50%;">91,6 ГБ</span>
<div style="left:294px;top:83px;width:81px;height:15px;background:#e6e6e6;border:1px solid #a9a9a9;"></div>
<div style="left:295px;top:84px;width:24px;height:13px;background:#06dc06;"></div>
<span class="t" style="top:82.50px;font-size:12px;color:#000;left:321.32px;transform:scaleX(0.9300);transform-origin:50% 50%;">31 %</span>
<span class="t" style="top:82.50px;font-size:12px;color:#000;left:383.00px;transform:scaleX(0.9523);transform-origin:0 50%;">Доступ за...</span>
<svg style="left:4px;top:103.5px" width="16" height="12" viewBox="0 0 16 12"><path d="M1.2 7.3L2.8 3.8H13.2L14.8 7.3Z" fill="#d4d4d4"/><rect x="1.2" y="7.3" width="13.6" height="4.2" rx="0.6" fill="#3a3a3a"/><rect x="11.3" y="8.9" width="2" height="1.3" fill="#4ee04e"/></svg>
<span class="t" style="top:101.50px;font-size:12px;color:#000;left:22.30px;transform:scaleX(0.9000);transform-origin:0 50%;">G:\</span>
<span class="t" style="top:101.50px;font-size:12px;color:#000;left:171.77px;transform:scaleX(0.9100);transform-origin:100% 50%;">260 ГБ</span>
<span class="t" style="top:101.50px;font-size:12px;color:#000;left:243.24px;transform:scaleX(0.9100);transform-origin:100% 50%;">59,3 ГБ</span>
<div style="left:294px;top:102px;width:81px;height:15px;background:#e6e6e6;border:1px solid #a9a9a9;"></div>
<div style="left:295px;top:103px;width:18px;height:13px;background:#06dc06;"></div>
<span class="t" style="top:101.50px;font-size:12px;color:#000;left:321.32px;transform:scaleX(0.9300);transform-origin:50% 50%;">23 %</span>
<span class="t" style="top:101.50px;font-size:12px;color:#000;left:383.00px;transform:scaleX(0.9523);transform-origin:0 50%;">Доступ за...</span>
<svg style="left:4px;top:122.5px" width="16" height="12" viewBox="0 0 16 12"><path d="M1.2 7.3L2.8 3.8H13.2L14.8 7.3Z" fill="#d4d4d4"/><rect x="1.2" y="7.3" width="13.6" height="4.2" rx="0.6" fill="#3a3a3a"/><rect x="11.3" y="8.9" width="2" height="1.3" fill="#4ee04e"/></svg>
<span class="t" style="top:120.50px;font-size:12px;color:#000;left:22.30px;transform:scaleX(0.9000);transform-origin:0 50%;">H:\</span>
<span class="t" style="top:120.50px;font-size:12px;color:#000;left:171.77px;transform:scaleX(0.9100);transform-origin:100% 50%;">300 ГБ</span>
<span class="t" style="top:120.50px;font-size:12px;color:#000;left:246.57px;transform:scaleX(0.9100);transform-origin:100% 50%;">104 ГБ</span>
<div style="left:294px;top:121px;width:81px;height:15px;background:#e6e6e6;border:1px solid #a9a9a9;"></div>
<div style="left:295px;top:122px;width:28px;height:13px;background:#06dc06;"></div>
<span class="t" style="top:120.50px;font-size:12px;color:#000;left:321.32px;transform:scaleX(0.9300);transform-origin:50% 50%;">35 %</span>
<span class="t" style="top:120.50px;font-size:12px;color:#000;left:383.00px;transform:scaleX(0.9523);transform-origin:0 50%;">Доступ за...</span>
<svg style="left:4px;top:141.5px" width="16" height="12" viewBox="0 0 16 12"><path d="M1.2 7.3L2.8 3.8H13.2L14.8 7.3Z" fill="#d4d4d4"/><rect x="1.2" y="7.3" width="13.6" height="4.2" rx="0.6" fill="#3a3a3a"/><rect x="11.3" y="8.9" width="2" height="1.3" fill="#4ee04e"/></svg>
<span class="t" style="top:139.50px;font-size:12px;color:#000;left:22.30px;transform:scaleX(0.9000);transform-origin:0 50%;">I:\</span>
<span class="t" style="top:139.50px;font-size:12px;color:#000;left:171.77px;transform:scaleX(0.9100);transform-origin:100% 50%;">300 ГБ</span>
<span class="t" style="top:139.50px;font-size:12px;color:#000;left:246.57px;transform:scaleX(0.9100);transform-origin:100% 50%;">296 ГБ</span>
<div style="left:294px;top:140px;width:81px;height:15px;background:#e6e6e6;border:1px solid #a9a9a9;"></div>
<div style="left:295px;top:141px;width:78px;height:13px;background:#06dc06;"></div>
<span class="t" style="top:139.50px;font-size:12px;color:#000;left:321.32px;transform:scaleX(0.9300);transform-origin:50% 50%;">99 %</span>
<span class="t" style="top:139.50px;font-size:12px;color:#000;left:383.00px;transform:scaleX(0.9523);transform-origin:0 50%;">Доступ за...</span>
</div>
<div style="left:459px;top:578px;width:16px;height:150px;background:#f0f0f0;"></div>
<svg style="left:459px;top:578px" width="16" height="17" viewBox="0 0 16 17"><path d="M4.3 10.7L8.0 7L11.7 10.7" stroke="#505050" stroke-width="1.7" fill="none"/></svg>
<svg style="left:459px;top:711px" width="16" height="17" viewBox="0 0 16 17"><path d="M4.3 6.3L8.0 10L11.7 6.3" stroke="#505050" stroke-width="1.7" fill="none"/></svg>
<div style="left:459px;top:595px;width:15.5px;height:87px;background:#cdcdcd;"></div>
<div style="left:480px;top:202px;width:942px;height:527px;background:#fff;border:1px solid #d5d5d5;"></div>
<div style="left:482px;top:179px;width:97px;height:24px;background:#f0f0f0;border:1px solid #dadada;border-bottom:none;"></div>
<div style="left:662px;top:179px;width:103px;height:24px;background:#f0f0f0;border:1px solid #dadada;border-bottom:none;"></div>
<div style="left:764px;top:179px;width:112.5px;height:24px;background:#f0f0f0;border:1px solid #dadada;border-bottom:none;"></div>
<div style="left:875.5px;top:179px;width:123.2px;height:24px;background:#f0f0f0;border:1px solid #dadada;border-bottom:none;"></div>
<div style="left:997.7px;top:179px;width:76.7px;height:24px;background:#f0f0f0;border:1px solid #dadada;border-bottom:none;"></div>
<div style="left:1073.4px;top:179px;width:80.3px;height:24px;background:#f0f0f0;border:1px solid #dadada;border-bottom:none;"></div>
<div style="left:578px;top:177px;width:85px;height:27px;background:#fff;border:1px solid #d9d9d9;border-bottom:none;"></div>
<span class="t" style="top:183.50px;font-size:12px;color:#000;left:510.50px;transform:scaleX(0.9935);transform-origin:0 50%;">Диаграмма</span>
<svg style="left:489px;top:184.5px" width="15" height="15" viewBox="0 0 15 15"><circle cx="7.2" cy="7.2" r="7" fill="#3f86d8"/><path d="M7.2 7.2L9.5 0.6A7 7 0 0 0 1.6 3Z" fill="#f6d23a"/><path d="M7.2 7.2L1.6 3A7 7 0 0 0 3 12.8Z" fill="#e2502a"/></svg>
<span class="t" style="top:181.50px;font-size:12px;color:#000;left:606.50px;">Таблица</span>
<svg style="left:585px;top:181.5px" width="17" height="16" viewBox="0 0 17 16"><g stroke="#777" fill="none"><rect x="0.5" y="1.5" width="3" height="3"/><rect x="0.5" y="6.5" width="3" height="3"/><rect x="0.5" y="11.5" width="3" height="3"/></g><path d="M6 3H10M12 3H16M6 8H10M12 8H16M6 13H10M12 13H16" stroke="#999"/></svg>
<span class="t" style="top:183.50px;font-size:12px;color:#000;left:689.50px;transform:scaleX(0.9886);transform-origin:0 50%;">Расширения</span>
<svg style="left:666px;top:183.5px" width="17" height="16" viewBox="0 0 17 16"><rect x="0.5" y="0.5" width="8" height="6" fill="#fff" stroke="#666"/><rect x="2" y="2" width="5" height="3" fill="#4a86d8"/><rect x="0.5" y="9.5" width="8" height="6" fill="#fff" stroke="#666"/><rect x="2" y="11" width="2.5" height="3" fill="#3aa648"/><rect x="4.5" y="11" width="2.5" height="3" fill="#e2502a"/><path d="M10.5 2H16M10.5 5H14.5M10.5 11H16M10.5 14H14.5" stroke="#666"/></svg>
<span class="t" style="top:183.50px;font-size:12px;color:#000;left:791.50px;">Пользователи</span>
<svg style="left:770px;top:183.5px" width="18" height="16" viewBox="0 0 18 16"><circle cx="6" cy="4.5" r="3.3" fill="#d9a066"/><path d="M0.5 15.5C0.5 10.5 3 8.5 6 8.5S11.5 10.5 11.5 15.5Z" fill="#3d9a4a"/><circle cx="12.5" cy="5" r="3.2" fill="#c98d55"/><path d="M7.5 15.5C7.5 11 9.8 9 12.5 9S17.5 11 17.5 15.5Z" fill="#4a86d8"/></svg>
<span class="t" style="top:183.50px;font-size:12px;color:#000;left:904.40px;transform:scaleX(0.9523);transform-origin:0 50%;">Возраст файлов</span>
<svg style="left:882.5px;top:183.0px" width="16" height="16" viewBox="0 0 16 16"><rect x="0.5" y="1.5" width="15" height="14" fill="#fff" stroke="#b0b0b0"/><rect x="0.5" y="1.5" width="15" height="3.5" fill="#4a7fdc"/><rect x="3" y="0" width="2" height="3" fill="#4a7fdc"/><rect x="11" y="0" width="2" height="3" fill="#4a7fdc"/><text x="8" y="13.2" font-size="8.5" font-weight="bold" text-anchor="middle" fill="#333" font-family="Liberation Sans, sans-serif">18</text></svg>
<span class="t" style="top:183.50px;font-size:12px;color:#000;left:1026.70px;transform:scaleX(0.9552);transform-origin:0 50%;">Топ 100</span>
<svg style="left:1003.7px;top:183.5px" width="17" height="17" viewBox="0 0 17 17"><path d="M5.5 0.5H12.5L15.5 3.5V14.5H5.5Z" fill="#fff" stroke="#8a8a8a"/><path d="M8 5H13.5M8 7.5H13.5M8 10H13.5M8 12.5H13.5" stroke="#999"/><path d="M4.5 16.5V9.5M1 12L4.5 8L8 12" stroke="#d8321e" stroke-width="1.8" fill="none"/></svg>
<span class="t" style="top:183.50px;font-size:12px;color:#000;left:1102.00px;transform:scaleX(0.9883);transform-origin:0 50%;">История</span>
<svg style="left:1080.9px;top:185.5px" width="15" height="12" viewBox="0 0 15 12"><path d="M0.5 11.5V6L3.5 1.5L6.5 6.5L9.5 0.8L14 7V11.5Z" fill="#3f7fd6"/><path d="M2 3.8L3.5 1.5L5.5 4.8L3.5 4ZM8 3.6L9.5 0.8L12 4.2L9.8 3.4Z" fill="#e2502a"/><path d="M11.5 4L14 7L12 9Z" fill="#f6a23a"/></svg>
<div style="left:633px;top:205px;width:1px;height:22px;background:#e5e5e5;"></div>
<div style="left:718.5px;top:205px;width:1px;height:22px;background:#e5e5e5;"></div>
<div style="left:804px;top:205px;width:1px;height:22px;background:#e5e5e5;"></div>
<div style="left:858px;top:205px;width:1px;height:22px;background:#e5e5e5;"></div>
<div style="left:913px;top:205px;width:1px;height:22px;background:#e5e5e5;"></div>
<div style="left:999px;top:205px;width:1px;height:22px;background:#e5e5e5;"></div>
<div style="left:1094.5px;top:205px;width:1px;height:22px;background:#e5e5e5;"></div>
<div style="left:1190.5px;top:205px;width:1px;height:22px;background:#e5e5e5;"></div>
<div style="left:1315px;top:205px;width:1px;height:22px;background:#e5e5e5;"></div>
<div style="left:718.5px;top:227px;width:85.5px;height:501px;background:#f0f0f0;"></div>
<span class="t" style="top:208.50px;font-size:12px;color:#000;left:490.50px;transform:scaleX(0.9198);transform-origin:0 50%;">Имя</span>
<span class="t" style="top:208.50px;font-size:12px;color:#000;left:671.25px;transform:scaleX(0.9455);transform-origin:100% 50%;">Размер</span>
<span class="t" style="top:208.50px;font-size:12px;color:#000;left:741.91px;transform:scaleX(0.9592);transform-origin:100% 50%;">Занято</span>
<svg style="left:787px;top:213px" width="9" height="6" viewBox="0 0 9 6"><path d="M1 1L4.5 4.5L8 1" stroke="#8a8a8a" stroke-width="1" fill="none"/></svg>
<span class="t" style="top:208.50px;font-size:12px;color:#000;left:814.86px;">Файлы</span>
<span class="t" style="top:208.50px;font-size:12px;color:#000;left:874.25px;transform:scaleX(1.0074);transform-origin:100% 50%;">Папки</span>
<span class="t" style="top:208.50px;font-size:12px;color:#000;left:922.75px;transform:scaleX(0.9652);transform-origin:0 50%;">% корня (З...</span>
<span class="t" style="top:208.50px;font-size:12px;color:#000;left:1005.00px;transform:scaleX(1.0062);transform-origin:0 50%;">Изменено</span>
<span class="t" style="top:208.50px;font-size:12px;color:#000;left:1101.00px;">Доступ</span>
<span class="t" style="top:208.50px;font-size:12px;color:#000;left:1197.00px;transform:scaleX(0.9457);transform-origin:0 50%;">Владелец</span>
<div style="left:482px;top:246px;width:834px;height:1px;background:repeating-linear-gradient(90deg,#eeeeee 0 1px,transparent 1px 2px);"></div>
<div style="left:482px;top:266px;width:834px;height:1px;background:repeating-linear-gradient(90deg,#eeeeee 0 1px,transparent 1px 2px);"></div>
<div style="left:482px;top:286px;width:834px;height:1px;background:repeating-linear-gradient(90deg,#eeeeee 0 1px,transparent 1px 2px);"></div>
<div style="left:482px;top:306px;width:834px;height:1px;background:repeating-linear-gradient(90deg,#eeeeee 0 1px,transparent 1px 2px);"></div>
<div style="left:482px;top:326px;width:834px;height:1px;background:repeating-linear-gradient(90deg,#eeeeee 0 1px,transparent 1px 2px);"></div>
<div style="left:482px;top:346px;width:834px;height:1px;background:repeating-linear-gradient(90deg,#eeeeee 0 1px,transparent 1px 2px);"></div>
<div style="left:482px;top:366px;width:834px;height:1px;background:repeating-linear-gradient(90deg,#eeeeee 0 1px,transparent 1px 2px);"></div>
<div style="left:482px;top:386px;width:834px;height:1px;background:repeating-linear-gradient(90deg,#eeeeee 0 1px,transparent 1px 2px);"></div>
<div style="left:482px;top:406px;width:834px;height:1px;background:repeating-linear-gradient(90deg,#eeeeee 0 1px,transparent 1px 2px);"></div>
<div style="left:482px;top:426px;width:834px;height:1px;background:repeating-linear-gradient(90deg,#eeeeee 0 1px,transparent 1px 2px);"></div>
<div style="left:482px;top:446px;width:834px;height:1px;background:repeating-linear-gradient(90deg,#eeeeee 0 1px,transparent 1px 2px);"></div>
<div style="left:482px;top:466px;width:834px;height:1px;background:repeating-linear-gradient(90deg,#eeeeee 0 1px,transparent 1px 2px);"></div>
<div style="left:482px;top:486px;width:834px;height:1px;background:repeating-linear-gradient(90deg,#eeeeee 0 1px,transparent 1px 2px);"></div>
<div style="left:482px;top:506px;width:834px;height:1px;background:repeating-linear-gradient(90deg,#eeeeee 0 1px,transparent 1px 2px);"></div>
<div style="left:482px;top:526px;width:834px;height:1px;background:repeating-linear-gradient(90deg,#eeeeee 0 1px,transparent 1px 2px);"></div>
<div style="left:482px;top:546px;width:834px;height:1px;background:repeating-linear-gradient(90deg,#eeeeee 0 1px,transparent 1px 2px);"></div>
<div style="left:482px;top:566px;width:834px;height:1px;background:repeating-linear-gradient(90deg,#eeeeee 0 1px,transparent 1px 2px);"></div>
<div style="left:482px;top:586px;width:834px;height:1px;background:repeating-linear-gradient(90deg,#eeeeee 0 1px,transparent 1px 2px);"></div>
<div style="left:482px;top:606px;width:834px;height:1px;background:repeating-linear-gradient(90deg,#eeeeee 0 1px,transparent 1px 2px);"></div>
<div style="left:482px;top:626px;width:834px;height:1px;background:repeating-linear-gradient(90deg,#eeeeee 0 1px,transparent 1px 2px);"></div>
<div style="left:482px;top:646px;width:834px;height:1px;background:repeating-linear-gradient(90deg,#eeeeee 0 1px,transparent 1px 2px);"></div>
<div style="left:482px;top:666px;width:834px;height:1px;background:repeating-linear-gradient(90deg,#eeeeee 0 1px,transparent 1px 2px);"></div>
<div style="left:482px;top:686px;width:834px;height:1px;background:repeating-linear-gradient(90deg,#eeeeee 0 1px,transparent 1px 2px);"></div>
<div style="left:482px;top:706px;width:834px;height:1px;background:repeating-linear-gradient(90deg,#eeeeee 0 1px,transparent 1px 2px);"></div>
<div style="left:482px;top:726px;width:834px;height:1px;background:repeating-linear-gradient(90deg,#eeeeee 0 1px,transparent 1px 2px);"></div>
<div style="left:633px;top:227px;width:1px;height:500px;background:repeating-linear-gradient(180deg,#eeeeee 0 1px,transparent 1px 2px);"></div>
<div style="left:718.5px;top:227px;width:1px;height:500px;background:repeating-linear-gradient(180deg,#eeeeee 0 1px,transparent 1px 2px);"></div>
<div style="left:804px;top:227px;width:1px;height:500px;background:repeating-linear-gradient(180deg,#eeeeee 0 1px,transparent 1px 2px);"></div>
<div style="left:858px;top:227px;width:1px;height:500px;background:repeating-linear-gradient(180deg,#eeeeee 0 1px,transparent 1px 2px);"></div>
<div style="left:913px;top:227px;width:1px;height:500px;background:repeating-linear-gradient(180deg,#eeeeee 0 1px,transparent 1px 2px);"></div>
<div style="left:999px;top:227px;width:1px;height:500px;background:repeating-linear-gradient(180deg,#eeeeee 0 1px,transparent 1px 2px);"></div>
<div style="left:1094.5px;top:227px;width:1px;height:500px;background:repeating-linear-gradient(180deg,#eeeeee 0 1px,transparent 1px 2px);"></div>
<div style="left:1190.5px;top:227px;width:1px;height:500px;background:repeating-linear-gradient(180deg,#eeeeee 0 1px,transparent 1px 2px);"></div>
<div style="left:1315px;top:227px;width:1px;height:500px;background:repeating-linear-gradient(180deg,#eeeeee 0 1px,transparent 1px 2px);"></div>
<svg style="left:492px;top:229px" width="13" height="16" viewBox="0 0 13 16"><path d="M0.5 0.5H11.5V8.5H12.5V15.5H0.5Z" fill="#fde69b" stroke="#f6d366"/><path d="M10.5 9.5V15" stroke="#f6d366"/></svg>
<span class="t" style="top:229.00px;font-size:12px;color:#000;left:512.00px;transform:scaleX(0.9475);transform-origin:0 50%;">DriverStore</span>
<span class="t" style="top:229.00px;font-size:12px;color:#000;left:679.61px;transform:scaleX(0.9150);transform-origin:100% 50%;">1,1 ГБ</span>
<span class="t" style="top:229.00px;font-size:12px;color:#000;left:764.61px;transform:scaleX(0.9150);transform-origin:100% 50%;">1,1 ГБ</span>
<span class="t" style="top:229.00px;font-size:12px;color:#000;left:823.97px;transform:scaleX(0.9000);transform-origin:100% 50%;">3 170</span>
<span class="t" style="top:229.00px;font-size:12px;color:#000;left:888.97px;transform:scaleX(0.9000);transform-origin:100% 50%;">750</span>
<div style="left:916px;top:229px;width:81px;height:16px;background:#e8e8e8;border:1px solid #b0b0b0;"></div>
<div style="left:917px;top:230px;width:22.594px;height:14px;background:linear-gradient(90deg,#a4a4fb,#c4c4fd);"></div>
<span class="t" style="top:229.00px;font-size:12px;color:#000;left:940.32px;transform:scaleX(0.9000);transform-origin:50% 50%;">28,6 %</span>
<span class="t" style="top:229.00px;font-size:12px;color:#000;left:1009.50px;transform:scaleX(0.8957);transform-origin:0 50%;">25.04.2019</span>
<span class="t" style="top:229.00px;font-size:12px;color:#000;left:1105.00px;transform:scaleX(0.8957);transform-origin:0 50%;">25.04.2019</span>
<span class="t" style="top:229.00px;font-size:12px;color:#000;left:1201.60px;transform:scaleX(0.9592);transform-origin:0 50%;">СИСТЕМА</span>
<svg style="left:492px;top:249px" width="13" height="16" viewBox="0 0 13 16"><path d="M0.5 0.5H11.5V8.5H12.5V15.5H0.5Z" fill="#fde69b" stroke="#f6d366"/><path d="M10.5 9.5V15" stroke="#f6d366"/></svg>
<span class="t" style="top:249.00px;font-size:12px;color:#000;left:512.00px;transform:scaleX(0.9652);transform-origin:0 50%;">CatRoot</span>
<span class="t" style="top:249.00px;font-size:12px;color:#000;left:662.77px;transform:scaleX(0.9150);transform-origin:100% 50%;">102,8 МБ</span>
<span class="t" style="top:249.00px;font-size:12px;color:#000;left:748.66px;transform:scaleX(0.9150);transform-origin:100% 50%;">116,4 МБ</span>
<span class="t" style="top:249.00px;font-size:12px;color:#000;left:823.97px;transform:scaleX(0.9000);transform-origin:100% 50%;">6 313</span>
<span class="t" style="top:249.00px;font-size:12px;color:#000;left:902.31px;transform:scaleX(0.9000);transform-origin:100% 50%;">2</span>
<div style="left:916px;top:249px;width:81px;height:16px;background:#e8e8e8;border:1px solid #b0b0b0;"></div>
<div style="left:917px;top:250px;width:2.449px;height:14px;background:linear-gradient(90deg,#a4a4fb,#c4c4fd);"></div>
<span class="t" style="top:249.00px;font-size:12px;color:#000;left:943.66px;transform:scaleX(0.9000);transform-origin:50% 50%;">3,1 %</span>
<span class="t" style="top:249.00px;font-size:12px;color:#000;left:1009.50px;transform:scaleX(0.8957);transform-origin:0 50%;">25.04.2019</span>
<span class="t" style="top:249.00px;font-size:12px;color:#000;left:1105.00px;transform:scaleX(0.8957);transform-origin:0 50%;">25.04.2019</span>
<span class="t" style="top:249.00px;font-size:12px;color:#000;left:1201.60px;transform:scaleX(0.9592);transform-origin:0 50%;">СИСТЕМА</span>
<svg style="left:492px;top:269px" width="13" height="16" viewBox="0 0 13 16"><path d="M0.5 0.5H11.5V8.5H12.5V15.5H0.5Z" fill="#fde69b" stroke="#f6d366"/><path d="M10.5 9.5V15" stroke="#f6d366"/></svg>
<span class="t" style="top:269.00px;font-size:12px;color:#000;left:512.00px;transform:scaleX(1.0142);transform-origin:0 50%;">winevt</span>
<span class="t" style="top:269.00px;font-size:12px;color:#000;left:662.77px;transform:scaleX(0.9150);transform-origin:100% 50%;">107,7 МБ</span>
<span class="t" style="top:269.00px;font-size:12px;color:#000;left:747.77px;transform:scaleX(0.9150);transform-origin:100% 50%;">107,7 МБ</span>
<span class="t" style="top:269.00px;font-size:12px;color:#000;left:833.97px;transform:scaleX(0.9000);transform-origin:100% 50%;">125</span>
<span class="t" style="top:269.00px;font-size:12px;color:#000;left:902.31px;transform:scaleX(0.9000);transform-origin:100% 50%;">2</span>
<div style="left:916px;top:269px;width:81px;height:16px;background:#e8e8e8;border:1px solid #b0b0b0;"></div>
<div style="left:917px;top:270px;width:2.2119999999999997px;height:14px;background:linear-gradient(90deg,#a4a4fb,#c4c4fd);"></div>
<span class="t" style="top:269.00px;font-size:12px;color:#000;left:943.66px;transform:scaleX(0.9000);transform-origin:50% 50%;">2,8 %</span>
<span class="t" style="top:269.00px;font-size:12px;color:#000;left:1009.50px;transform:scaleX(0.8957);transform-origin:0 50%;">15.05.2019</span>
<span class="t" style="top:269.00px;font-size:12px;color:#000;left:1105.00px;transform:scaleX(0.8957);transform-origin:0 50%;">15.05.2019</span>
<span class="t" style="top:269.00px;font-size:12px;color:#000;left:1201.60px;transform:scaleX(0.9592);transform-origin:0 50%;">СИСТЕМА</span>
<svg style="left:492px;top:289px" width="13" height="16" viewBox="0 0 13 16"><path d="M0.5 0.5H11.5V8.5H12.5V15.5H0.5Z" fill="#fde69b" stroke="#f6d366"/><path d="M10.5 9.5V15" stroke="#f6d366"/></svg>
<span class="t" style="top:289.00px;font-size:12px;color:#000;left:512.00px;transform:scaleX(0.9579);transform-origin:0 50%;">drivers</span>
<span class="t" style="top:289.00px;font-size:12px;color:#000;left:662.77px;transform:scaleX(0.9150);transform-origin:100% 50%;">103,0 МБ</span>
<span class="t" style="top:289.00px;font-size:12px;color:#000;left:747.77px;transform:scaleX(0.9150);transform-origin:100% 50%;">103,9 МБ</span>
<span class="t" style="top:289.00px;font-size:12px;color:#000;left:833.97px;transform:scaleX(0.9000);transform-origin:100% 50%;">542</span>
<span class="t" style="top:289.00px;font-size:12px;color:#000;left:902.31px;transform:scaleX(0.9000);transform-origin:100% 50%;">6</span>
<div style="left:916px;top:289px;width:81px;height:16px;background:#e8e8e8;border:1px solid #b0b0b0;"></div>
<div style="left:917px;top:290px;width:2.133px;height:14px;background:linear-gradient(90deg,#a4a4fb,#c4c4fd);"></div>
<span class="t" style="top:289.00px;font-size:12px;color:#000;left:943.66px;transform:scaleX(0.9000);transform-origin:50% 50%;">2,7 %</span>
<span class="t" style="top:289.00px;font-size:12px;color:#000;left:1009.50px;transform:scaleX(0.8957);transform-origin:0 50%;">15.05.2019</span>
<span class="t" style="top:289.00px;font-size:12px;color:#000;left:1105.00px;transform:scaleX(0.8957);transform-origin:0 50%;">15.05.2019</span>
<span class="t" style="top:289.00px;font-size:12px;color:#000;left:1201.60px;transform:scaleX(0.9688);transform-origin:0 50%;">TrustedInstaller</span>
<svg style="left:492px;top:309px" width="13" height="16" viewBox="0 0 13 16"><path d="M0.5 0.5H11.5V8.5H12.5V15.5H0.5Z" fill="#fde69b" stroke="#f6d366"/><path d="M10.5 9.5V15" stroke="#f6d366"/></svg>
<span class="t" style="top:309.00px;font-size:12px;color:#000;left:512.00px;">wbem</span>
<span class="t" style="top:309.00px;font-size:12px;color:#000;left:669.44px;transform:scaleX(0.9150);transform-origin:100% 50%;">80,7 МБ</span>
<span class="t" style="top:309.00px;font-size:12px;color:#000;left:754.44px;transform:scaleX(0.9150);transform-origin:100% 50%;">81,9 МБ</span>
<span class="t" style="top:309.00px;font-size:12px;color:#000;left:833.97px;transform:scaleX(0.9000);transform-origin:100% 50%;">623</span>
<span class="t" style="top:309.00px;font-size:12px;color:#000;left:895.64px;transform:scaleX(0.9000);transform-origin:100% 50%;">10</span>
<div style="left:916px;top:309px;width:81px;height:16px;background:#e8e8e8;border:1px solid #b0b0b0;"></div>
<div style="left:917px;top:310px;width:1.7380000000000002px;height:14px;background:linear-gradient(90deg,#a4a4fb,#c4c4fd);"></div>
<span class="t" style="top:309.00px;font-size:12px;color:#000;left:943.66px;transform:scaleX(0.9000);transform-origin:50% 50%;">2,2 %</span>
<span class="t" style="top:309.00px;font-size:12px;color:#000;left:1009.50px;transform:scaleX(0.8957);transform-origin:0 50%;">15.05.2019</span>
<span class="t" style="top:309.00px;font-size:12px;color:#000;left:1105.00px;transform:scaleX(0.8957);transform-origin:0 50%;">15.05.2019</span>
<span class="t" style="top:309.00px;font-size:12px;color:#000;left:1201.60px;transform:scaleX(0.9688);transform-origin:0 50%;">TrustedInstaller</span>
<svg style="left:492px;top:329px" width="13" height="16" viewBox="0 0 13 16"><path d="M0.5 0.5H8L11.5 4V15.5H0.5Z" fill="#f8f8f8" stroke="#999"/><path d="M8 0.5V4H11.5" fill="none" stroke="#999"/></svg>
<span class="t" style="top:329.00px;font-size:12px;color:#000;left:512.00px;transform:scaleX(0.9083);transform-origin:0 50%;">RCoRes64.dat</span>
<span class="t" style="top:329.00px;font-size:12px;color:#000;left:669.44px;transform:scaleX(0.9150);transform-origin:100% 50%;">69,2 МБ</span>
<span class="t" style="top:329.00px;font-size:12px;color:#000;left:754.44px;transform:scaleX(0.9150);transform-origin:100% 50%;">69,2 МБ</span>
<span class="t" style="top:329.00px;font-size:12px;color:#000;left:847.31px;transform:scaleX(0.9000);transform-origin:100% 50%;">1</span>
<span class="t" style="top:329.00px;font-size:12px;color:#000;left:902.31px;transform:scaleX(0.9000);transform-origin:100% 50%;">0</span>
<div style="left:916px;top:329px;width:81px;height:16px;background:#e8e8e8;border:1px solid #b0b0b0;"></div>
<div style="left:917px;top:330px;width:1.4220000000000002px;height:14px;background:linear-gradient(90deg,#a4a4fb,#c4c4fd);"></div>
<span class="t" style="top:329.00px;font-size:12px;color:#000;left:943.66px;transform:scaleX(0.9000);transform-origin:50% 50%;">1,8 %</span>
<span class="t" style="top:329.00px;font-size:12px;color:#000;left:1009.50px;transform:scaleX(0.8957);transform-origin:0 50%;">18.03.2016</span>
<span class="t" style="top:329.00px;font-size:12px;color:#000;left:1105.00px;transform:scaleX(0.8957);transform-origin:0 50%;">16.03.2019</span>
<span class="t" style="top:329.00px;font-size:12px;color:#000;left:1201.60px;">Администраторы</span>
<svg style="left:492px;top:349px" width="13" height="16" viewBox="0 0 13 16"><path d="M0.5 0.5H11.5V8.5H12.5V15.5H0.5Z" fill="#fde69b" stroke="#f6d366"/><path d="M10.5 9.5V15" stroke="#f6d366"/></svg>
<span class="t" style="top:349.00px;font-size:12px;color:#000;left:512.00px;transform:scaleX(0.9935);transform-origin:0 50%;">spool</span>
<span class="t" style="top:349.00px;font-size:12px;color:#000;left:669.44px;transform:scaleX(0.9150);transform-origin:100% 50%;">52,1 МБ</span>
<span class="t" style="top:349.00px;font-size:12px;color:#000;left:754.44px;transform:scaleX(0.9150);transform-origin:100% 50%;">52,3 МБ</span>
<span class="t" style="top:349.00px;font-size:12px;color:#000;left:834.86px;transform:scaleX(0.9000);transform-origin:100% 50%;">110</span>
<span class="t" style="top:349.00px;font-size:12px;color:#000;left:895.64px;transform:scaleX(0.9000);transform-origin:100% 50%;">28</span>
<div style="left:916px;top:349px;width:81px;height:16px;background:#e8e8e8;border:1px solid #b0b0b0;"></div>
<div style="left:917px;top:350px;width:1.2px;height:14px;background:linear-gradient(90deg,#a4a4fb,#c4c4fd);"></div>
<span class="t" style="top:349.00px;font-size:12px;color:#000;left:943.66px;transform:scaleX(0.9000);transform-origin:50% 50%;">1,4 %</span>
<span class="t" style="top:349.00px;font-size:12px;color:#000;left:1009.50px;transform:scaleX(0.8957);transform-origin:0 50%;">16.03.2019</span>
<span class="t" style="top:349.00px;font-size:12px;color:#000;left:1105.00px;transform:scaleX(0.8957);transform-origin:0 50%;">16.03.2019</span>
<span class="t" style="top:349.00px;font-size:12px;color:#000;left:1201.60px;transform:scaleX(0.9592);transform-origin:0 50%;">СИСТЕМА</span>
<svg style="left:492px;top:369px" width="13" height="16" viewBox="0 0 13 16"><path d="M0.5 0.5H11.5V8.5H12.5V15.5H0.5Z" fill="#fde69b" stroke="#f6d366"/><path d="M10.5 9.5V15" stroke="#f6d366"/></svg>
<span class="t" style="top:369.00px;font-size:12px;color:#000;left:512.00px;transform:scaleX(1.0226);transform-origin:0 50%;">migwiz</span>
<span class="t" style="top:369.00px;font-size:12px;color:#000;left:669.44px;transform:scaleX(0.9150);transform-origin:100% 50%;">46,5 МБ</span>
<span class="t" style="top:369.00px;font-size:12px;color:#000;left:754.44px;transform:scaleX(0.9150);transform-origin:100% 50%;">47,4 МБ</span>
<span class="t" style="top:369.00px;font-size:12px;color:#000;left:833.97px;transform:scaleX(0.9000);transform-origin:100% 50%;">418</span>
<span class="t" style="top:369.00px;font-size:12px;color:#000;left:895.64px;transform:scaleX(0.9000);transform-origin:100% 50%;">51</span>
<div style="left:916px;top:369px;width:81px;height:16px;background:#e8e8e8;border:1px solid #b0b0b0;"></div>
<div style="left:917px;top:370px;width:1.2px;height:14px;background:linear-gradient(90deg,#a4a4fb,#c4c4fd);"></div>
<span class="t" style="top:369.00px;font-size:12px;color:#000;left:943.66px;transform:scaleX(0.9000);transform-origin:50% 50%;">1,3 %</span>
<span class="t" style="top:369.00px;font-size:12px;color:#000;left:1009.50px;transform:scaleX(0.8957);transform-origin:0 50%;">05.01.2019</span>
<span class="t" style="top:369.00px;font-size:12px;color:#000;left:1105.00px;transform:scaleX(0.8957);transform-origin:0 50%;">05.01.2019</span>
<span class="t" style="top:369.00px;font-size:12px;color:#000;left:1201.60px;transform:scaleX(0.9688);transform-origin:0 50%;">TrustedInstaller</span>
<svg style="left:492px;top:389px" width="13" height="16" viewBox="0 0 13 16"><path d="M0.5 0.5H11.5V8.5H12.5V15.5H0.5Z" fill="#fde69b" stroke="#f6d366"/><path d="M10.5 9.5V15" stroke="#f6d366"/></svg>
<span class="t" style="top:389.00px;font-size:12px;color:#000;left:512.00px;transform:scaleX(0.9375);transform-origin:0 50%;">ru-RU</span>
<span class="t" style="top:389.00px;font-size:12px;color:#000;left:669.44px;transform:scaleX(0.9150);transform-origin:100% 50%;">40,3 МБ</span>
<span class="t" style="top:389.00px;font-size:12px;color:#000;left:754.44px;transform:scaleX(0.9150);transform-origin:100% 50%;">42,7 МБ</span>
<span class="t" style="top:389.00px;font-size:12px;color:#000;left:823.97px;transform:scaleX(0.9000);transform-origin:100% 50%;">1 604</span>
<span class="t" style="top:389.00px;font-size:12px;color:#000;left:902.31px;transform:scaleX(0.9000);transform-origin:100% 50%;">3</span>
<div style="left:916px;top:389px;width:81px;height:16px;background:#e8e8e8;border:1px solid #b0b0b0;"></div>
<div style="left:917px;top:390px;width:1.2px;height:14px;background:linear-gradient(90deg,#a4a4fb,#c4c4fd);"></div>
<span class="t" style="top:389.00px;font-size:12px;color:#000;left:943.66px;transform:scaleX(0.9000);transform-origin:50% 50%;">1,1 %</span>
<span class="t" style="top:389.00px;font-size:12px;color:#000;left:1009.50px;transform:scaleX(0.8957);transform-origin:0 50%;">05.01.2019</span>
<span class="t" style="top:389.00px;font-size:12px;color:#000;left:1105.00px;transform:scaleX(0.8957);transform-origin:0 50%;">05.01.2019</span>
<span class="t" style="top:389.00px;font-size:12px;color:#000;left:1201.60px;transform:scaleX(0.9688);transform-origin:0 50%;">TrustedInstaller</span>
<svg style="left:492px;top:409px" width="13" height="16" viewBox="0 0 13 16"><path d="M0.5 0.5H11.5V8.5H12.5V15.5H0.5Z" fill="#fde69b" stroke="#f6d366"/><path d="M10.5 9.5V15" stroke="#f6d366"/></svg>
<span class="t" style="top:409.00px;font-size:12px;color:#000;left:512.00px;transform:scaleX(0.9917);transform-origin:0 50%;">catroot2</span>
<span class="t" style="top:409.00px;font-size:12px;color:#000;left:669.44px;transform:scaleX(0.9150);transform-origin:100% 50%;">42,0 МБ</span>
<span class="t" style="top:409.00px;font-size:12px;color:#000;left:754.44px;transform:scaleX(0.9150);transform-origin:100% 50%;">42,0 МБ</span>
<span class="t" style="top:409.00px;font-size:12px;color:#000;left:847.31px;transform:scaleX(0.9000);transform-origin:100% 50%;">5</span>
<span class="t" style="top:409.00px;font-size:12px;color:#000;left:902.31px;transform:scaleX(0.9000);transform-origin:100% 50%;">2</span>
<div style="left:916px;top:409px;width:81px;height:16px;background:#e8e8e8;border:1px solid #b0b0b0;"></div>
<div style="left:917px;top:410px;width:1.2px;height:14px;background:linear-gradient(90deg,#a4a4fb,#c4c4fd);"></div>
<span class="t" style="top:409.00px;font-size:12px;color:#000;left:943.66px;transform:scaleX(0.9000);transform-origin:50% 50%;">1,1 %</span>
<span class="t" style="top:409.00px;font-size:12px;color:#000;left:1009.50px;transform:scaleX(0.8957);transform-origin:0 50%;">15.05.2019</span>
<span class="t" style="top:409.00px;font-size:12px;color:#000;left:1105.00px;transform:scaleX(0.8957);transform-origin:0 50%;">15.05.2019</span>
<span class="t" style="top:409.00px;font-size:12px;color:#000;left:1201.60px;transform:scaleX(0.9592);transform-origin:0 50%;">СИСТЕМА</span>
<svg style="left:492px;top:429px" width="13" height="16" viewBox="0 0 13 16"><path d="M0.5 0.5H8L11.5 4V15.5H0.5Z" fill="#fdfdfd" stroke="#8f8f8f"/><path d="M8 0.5V4H11.5" fill="none" stroke="#8f8f8f"/><circle cx="5.2" cy="7" r="2.7" fill="#eeeeee" stroke="#8c8c8c" stroke-width="0.9"/><circle cx="5.2" cy="7" r="1" fill="none" stroke="#9a9a9a" stroke-width="0.7"/><circle cx="8" cy="10.6" r="1.9" fill="#cfe3f5" stroke="#7fa6cc" stroke-width="0.9"/><path d="M6.8 8.8L7.6 9.6" stroke="#8c8c8c" stroke-width="1.2"/></svg>
<span class="t" style="top:429.00px;font-size:12px;color:#000;left:512.00px;transform:scaleX(1.0316);transform-origin:0 50%;">nvcompiler.dll</span>
<span class="t" style="top:429.00px;font-size:12px;color:#000;left:669.44px;transform:scaleX(0.9150);transform-origin:100% 50%;">40,8 МБ</span>
<span class="t" style="top:429.00px;font-size:12px;color:#000;left:754.44px;transform:scaleX(0.9150);transform-origin:100% 50%;">40,8 МБ</span>
<span class="t" style="top:429.00px;font-size:12px;color:#000;left:847.31px;transform:scaleX(0.9000);transform-origin:100% 50%;">1</span>
<span class="t" style="top:429.00px;font-size:12px;color:#000;left:902.31px;transform:scaleX(0.9000);transform-origin:100% 50%;">0</span>
<div style="left:916px;top:429px;width:81px;height:16px;background:#e8e8e8;border:1px solid #b0b0b0;"></div>
<div style="left:917px;top:430px;width:1.2px;height:14px;background:linear-gradient(90deg,#a4a4fb,#c4c4fd);"></div>
<span class="t" style="top:429.00px;font-size:12px;color:#000;left:943.66px;transform:scaleX(0.9000);transform-origin:50% 50%;">1,1 %</span>
<span class="t" style="top:429.00px;font-size:12px;color:#000;left:1009.50px;transform:scaleX(0.8957);transform-origin:0 50%;">23.07.2015</span>
<span class="t" style="top:429.00px;font-size:12px;color:#000;left:1105.00px;transform:scaleX(0.8957);transform-origin:0 50%;">16.03.2019</span>
<span class="t" style="top:429.00px;font-size:12px;color:#000;left:1201.60px;">Администраторы</span>
<svg style="left:492px;top:449px" width="13" height="16" viewBox="0 0 13 16"><path d="M0.5 0.5H8L11.5 4V15.5H0.5Z" fill="#fdfdfd" stroke="#8f8f8f"/><path d="M8 0.5V4H11.5" fill="none" stroke="#8f8f8f"/><circle cx="5.2" cy="7" r="2.7" fill="#eeeeee" stroke="#8c8c8c" stroke-width="0.9"/><circle cx="5.2" cy="7" r="1" fill="none" stroke="#9a9a9a" stroke-width="0.7"/><circle cx="8" cy="10.6" r="1.9" fill="#cfe3f5" stroke="#7fa6cc" stroke-width="0.9"/><path d="M6.8 8.8L7.6 9.6" stroke="#8c8c8c" stroke-width="1.2"/></svg>
<span class="t" style="top:449.00px;font-size:12px;color:#000;left:512.00px;transform:scaleX(0.9589);transform-origin:0 50%;">WindowsCodecsRa...</span>
<span class="t" style="top:449.00px;font-size:12px;color:#000;left:669.44px;transform:scaleX(0.9150);transform-origin:100% 50%;">31,2 МБ</span>
<span class="t" style="top:449.00px;font-size:12px;color:#000;left:754.44px;transform:scaleX(0.9150);transform-origin:100% 50%;">31,2 МБ</span>
<span class="t" style="top:449.00px;font-size:12px;color:#000;left:847.31px;transform:scaleX(0.9000);transform-origin:100% 50%;">1</span>
<span class="t" style="top:449.00px;font-size:12px;color:#000;left:902.31px;transform:scaleX(0.9000);transform-origin:100% 50%;">0</span>
<div style="left:916px;top:449px;width:81px;height:16px;background:#e8e8e8;border:1px solid #b0b0b0;"></div>
<div style="left:917px;top:450px;width:1.2px;height:14px;background:linear-gradient(90deg,#a4a4fb,#c4c4fd);"></div>
<span class="t" style="top:449.00px;font-size:12px;color:#000;left:943.66px;transform:scaleX(0.9000);transform-origin:50% 50%;">0,8 %</span>
<span class="t" style="top:449.00px;font-size:12px;color:#000;left:1009.50px;transform:scaleX(0.8957);transform-origin:0 50%;">05.01.2019</span>
<span class="t" style="top:449.00px;font-size:12px;color:#000;left:1105.00px;transform:scaleX(0.8957);transform-origin:0 50%;">05.01.2019</span>
<span class="t" style="top:449.00px;font-size:12px;color:#000;left:1201.60px;transform:scaleX(0.9688);transform-origin:0 50%;">TrustedInstaller</span>
<svg style="left:492px;top:469px" width="13" height="16" viewBox="0 0 13 16"><path d="M0.5 0.5H11.5V8.5H12.5V15.5H0.5Z" fill="#fde69b" stroke="#f6d366"/><path d="M10.5 9.5V15" stroke="#f6d366"/></svg>
<span class="t" style="top:469.00px;font-size:12px;color:#000;left:512.00px;transform:scaleX(1.0055);transform-origin:0 50%;">Macromed</span>
<span class="t" style="top:469.00px;font-size:12px;color:#000;left:669.44px;transform:scaleX(0.9150);transform-origin:100% 50%;">29,4 МБ</span>
<span class="t" style="top:469.00px;font-size:12px;color:#000;left:754.44px;transform:scaleX(0.9150);transform-origin:100% 50%;">29,4 МБ</span>
<span class="t" style="top:469.00px;font-size:12px;color:#000;left:847.31px;transform:scaleX(0.9000);transform-origin:100% 50%;">4</span>
<span class="t" style="top:469.00px;font-size:12px;color:#000;left:902.31px;transform:scaleX(0.9000);transform-origin:100% 50%;">1</span>
<div style="left:916px;top:469px;width:81px;height:16px;background:#e8e8e8;border:1px solid #b0b0b0;"></div>
<div style="left:917px;top:470px;width:1.2px;height:14px;background:linear-gradient(90deg,#a4a4fb,#c4c4fd);"></div>
<span class="t" style="top:469.00px;font-size:12px;color:#000;left:943.66px;transform:scaleX(0.9000);transform-origin:50% 50%;">0,8 %</span>
<span class="t" style="top:469.00px;font-size:12px;color:#000;left:1009.50px;transform:scaleX(0.8957);transform-origin:0 50%;">14.05.2019</span>
<span class="t" style="top:469.00px;font-size:12px;color:#000;left:1105.00px;transform:scaleX(0.8957);transform-origin:0 50%;">14.05.2019</span>
<span class="t" style="top:469.00px;font-size:12px;color:#000;left:1201.60px;transform:scaleX(0.9592);transform-origin:0 50%;">СИСТЕМА</span>
<svg style="left:492px;top:489px" width="13" height="16" viewBox="0 0 13 16"><path d="M0.5 0.5H8L11.5 4V15.5H0.5Z" fill="#fdfdfd" stroke="#8f8f8f"/><path d="M8 0.5V4H11.5" fill="none" stroke="#8f8f8f"/><circle cx="5.2" cy="7" r="2.7" fill="#eeeeee" stroke="#8c8c8c" stroke-width="0.9"/><circle cx="5.2" cy="7" r="1" fill="none" stroke="#9a9a9a" stroke-width="0.7"/><circle cx="8" cy="10.6" r="1.9" fill="#cfe3f5" stroke="#7fa6cc" stroke-width="0.9"/><path d="M6.8 8.8L7.6 9.6" stroke="#8c8c8c" stroke-width="1.2"/></svg>
<span class="t" style="top:489.00px;font-size:12px;color:#000;left:512.00px;">nvoglv64.dll</span>
<span class="t" style="top:489.00px;font-size:12px;color:#000;left:669.44px;transform:scaleX(0.9150);transform-origin:100% 50%;">29,1 МБ</span>
<span class="t" style="top:489.00px;font-size:12px;color:#000;left:754.44px;transform:scaleX(0.9150);transform-origin:100% 50%;">29,1 МБ</span>
<span class="t" style="top:489.00px;font-size:12px;color:#000;left:847.31px;transform:scaleX(0.9000);transform-origin:100% 50%;">1</span>
<span class="t" style="top:489.00px;font-size:12px;color:#000;left:902.31px;transform:scaleX(0.9000);transform-origin:100% 50%;">0</span>
<div style="left:916px;top:489px;width:81px;height:16px;background:#e8e8e8;border:1px solid #b0b0b0;"></div>
<div style="left:917px;top:490px;width:1.2px;height:14px;background:linear-gradient(90deg,#a4a4fb,#c4c4fd);"></div>
<span class="t" style="top:489.00px;font-size:12px;color:#000;left:943.66px;transform:scaleX(0.9000);transform-origin:50% 50%;">0,8 %</span>
<span class="t" style="top:489.00px;font-size:12px;color:#000;left:1009.50px;transform:scaleX(0.8957);transform-origin:0 50%;">23.07.2015</span>
<span class="t" style="top:489.00px;font-size:12px;color:#000;left:1105.00px;transform:scaleX(0.8957);transform-origin:0 50%;">16.03.2019</span>
<span class="t" style="top:489.00px;font-size:12px;color:#000;left:1201.60px;">Администраторы</span>
<svg style="left:492px;top:509px" width="13" height="16" viewBox="0 0 13 16"><path d="M0.5 0.5H11.5V8.5H12.5V15.5H0.5Z" fill="#fde69b" stroke="#f6d366"/><path d="M10.5 9.5V15" stroke="#f6d366"/></svg>
<span class="t" style="top:509.00px;font-size:12px;color:#000;left:512.00px;transform:scaleX(0.9136);transform-origin:0 50%;">IME</span>
<span class="t" style="top:509.00px;font-size:12px;color:#000;left:669.44px;transform:scaleX(0.9150);transform-origin:100% 50%;">25,1 МБ</span>
<span class="t" style="top:509.00px;font-size:12px;color:#000;left:754.44px;transform:scaleX(0.9150);transform-origin:100% 50%;">25,3 МБ</span>
<span class="t" style="top:509.00px;font-size:12px;color:#000;left:840.64px;transform:scaleX(0.9000);transform-origin:100% 50%;">62</span>
<span class="t" style="top:509.00px;font-size:12px;color:#000;left:902.31px;transform:scaleX(0.9000);transform-origin:100% 50%;">9</span>
<div style="left:916px;top:509px;width:81px;height:16px;background:#e8e8e8;border:1px solid #b0b0b0;"></div>
<div style="left:917px;top:510px;width:1.2px;height:14px;background:linear-gradient(90deg,#a4a4fb,#c4c4fd);"></div>
<span class="t" style="top:509.00px;font-size:12px;color:#000;left:943.66px;transform:scaleX(0.9000);transform-origin:50% 50%;">0,7 %</span>
<span class="t" style="top:509.00px;font-size:12px;color:#000;left:1009.50px;transform:scaleX(0.8957);transform-origin:0 50%;">05.01.2019</span>
<span class="t" style="top:509.00px;font-size:12px;color:#000;left:1105.00px;transform:scaleX(0.8957);transform-origin:0 50%;">05.01.2019</span>
<span class="t" style="top:509.00px;font-size:12px;color:#000;left:1201.60px;transform:scaleX(0.9592);transform-origin:0 50%;">СИСТЕМА</span>
<svg style="left:492px;top:529px" width="13" height="16" viewBox="0 0 13 16"><path d="M0.5 0.5H11.5V15.5H0.5Z" fill="#fef3cf" stroke="#fbe9b0"/></svg>
<span class="t" style="top:529.00px;font-size:12px;color:#000;left:512.00px;transform:scaleX(0.8459);transform-origin:0 50%;">F12</span>
<span class="t" style="top:529.00px;font-size:12px;color:#000;left:669.44px;transform:scaleX(0.9150);transform-origin:100% 50%;">25,0 МБ</span>
<span class="t" style="top:529.00px;font-size:12px;color:#000;left:754.44px;transform:scaleX(0.9150);transform-origin:100% 50%;">25,1 МБ</span>
<span class="t" style="top:529.00px;font-size:12px;color:#000;left:840.64px;transform:scaleX(0.9000);transform-origin:100% 50%;">32</span>
<span class="t" style="top:529.00px;font-size:12px;color:#000;left:902.31px;transform:scaleX(0.9000);transform-origin:100% 50%;">1</span>
<div style="left:916px;top:529px;width:81px;height:16px;background:#e8e8e8;border:1px solid #b0b0b0;"></div>
<div style="left:917px;top:530px;width:1.2px;height:14px;background:linear-gradient(90deg,#a4a4fb,#c4c4fd);"></div>
<span class="t" style="top:529.00px;font-size:12px;color:#000;left:943.66px;transform:scaleX(0.9000);transform-origin:50% 50%;">0,7 %</span>
<span class="t" style="top:529.00px;font-size:12px;color:#000;left:1009.50px;transform:scaleX(0.8957);transform-origin:0 50%;">05.01.2019</span>
<span class="t" style="top:529.00px;font-size:12px;color:#000;left:1105.00px;transform:scaleX(0.8957);transform-origin:0 50%;">05.01.2019</span>
<span class="t" style="top:529.00px;font-size:12px;color:#000;left:1201.60px;transform:scaleX(0.9688);transform-origin:0 50%;">TrustedInstaller</span>
<svg style="left:492px;top:549px" width="13" height="16" viewBox="0 0 13 16"><path d="M0.5 0.5H8L11.5 4V15.5H0.5Z" fill="#fdfdfd" stroke="#8f8f8f"/><path d="M8 0.5V4H11.5" fill="none" stroke="#8f8f8f"/><circle cx="5.2" cy="7" r="2.7" fill="#eeeeee" stroke="#8c8c8c" stroke-width="0.9"/><circle cx="5.2" cy="7" r="1" fill="none" stroke="#9a9a9a" stroke-width="0.7"/><circle cx="8" cy="10.6" r="1.9" fill="#cfe3f5" stroke="#7fa6cc" stroke-width="0.9"/><path d="M6.8 8.8L7.6 9.6" stroke="#8c8c8c" stroke-width="1.2"/></svg>
<span class="t" style="top:549.00px;font-size:12px;color:#000;left:512.00px;transform:scaleX(0.9814);transform-origin:0 50%;">imageres.dll</span>
<span class="t" style="top:549.00px;font-size:12px;color:#000;left:669.44px;transform:scaleX(0.9150);transform-origin:100% 50%;">25,0 МБ</span>
<span class="t" style="top:549.00px;font-size:12px;color:#000;left:754.44px;transform:scaleX(0.9150);transform-origin:100% 50%;">25,0 МБ</span>
<span class="t" style="top:549.00px;font-size:12px;color:#000;left:847.31px;transform:scaleX(0.9000);transform-origin:100% 50%;">1</span>
<span class="t" style="top:549.00px;font-size:12px;color:#000;left:902.31px;transform:scaleX(0.9000);transform-origin:100% 50%;">0</span>
<div style="left:916px;top:549px;width:81px;height:16px;background:#e8e8e8;border:1px solid #b0b0b0;"></div>
<div style="left:917px;top:550px;width:1.2px;height:14px;background:linear-gradient(90deg,#a4a4fb,#c4c4fd);"></div>
<span class="t" style="top:549.00px;font-size:12px;color:#000;left:943.66px;transform:scaleX(0.9000);transform-origin:50% 50%;">0,7 %</span>
<span class="t" style="top:549.00px;font-size:12px;color:#000;left:1009.50px;transform:scaleX(0.8957);transform-origin:0 50%;">16.07.2016</span>
<span class="t" style="top:549.00px;font-size:12px;color:#000;left:1105.00px;transform:scaleX(0.8957);transform-origin:0 50%;">16.07.2016</span>
<span class="t" style="top:549.00px;font-size:12px;color:#000;left:1201.60px;transform:scaleX(0.9688);transform-origin:0 50%;">TrustedInstaller</span>
<svg style="left:492px;top:569px" width="13" height="16" viewBox="0 0 13 16"><path d="M0.5 0.5H8L11.5 4V15.5H0.5Z" fill="#fdfdfd" stroke="#8f8f8f"/><path d="M8 0.5V4H11.5" fill="none" stroke="#8f8f8f"/><circle cx="5.2" cy="7" r="2.7" fill="#eeeeee" stroke="#8c8c8c" stroke-width="0.9"/><circle cx="5.2" cy="7" r="1" fill="none" stroke="#9a9a9a" stroke-width="0.7"/><circle cx="8" cy="10.6" r="1.9" fill="#cfe3f5" stroke="#7fa6cc" stroke-width="0.9"/><path d="M6.8 8.8L7.6 9.6" stroke="#8c8c8c" stroke-width="1.2"/></svg>
<span class="t" style="top:569.00px;font-size:12px;color:#000;left:512.00px;transform:scaleX(1.0460);transform-origin:0 50%;">mshtml.dll</span>
<span class="t" style="top:569.00px;font-size:12px;color:#000;left:669.44px;transform:scaleX(0.9150);transform-origin:100% 50%;">22,6 МБ</span>
<span class="t" style="top:569.00px;font-size:12px;color:#000;left:754.44px;transform:scaleX(0.9150);transform-origin:100% 50%;">22,6 МБ</span>
<span class="t" style="top:569.00px;font-size:12px;color:#000;left:847.31px;transform:scaleX(0.9000);transform-origin:100% 50%;">1</span>
<span class="t" style="top:569.00px;font-size:12px;color:#000;left:902.31px;transform:scaleX(0.9000);transform-origin:100% 50%;">0</span>
<div style="left:916px;top:569px;width:81px;height:16px;background:#e8e8e8;border:1px solid #b0b0b0;"></div>
<div style="left:917px;top:570px;width:1.2px;height:14px;background:linear-gradient(90deg,#a4a4fb,#c4c4fd);"></div>
<span class="t" style="top:569.00px;font-size:12px;color:#000;left:943.66px;transform:scaleX(0.9000);transform-origin:50% 50%;">0,6 %</span>
<span class="t" style="top:569.00px;font-size:12px;color:#000;left:1009.50px;transform:scaleX(0.8957);transform-origin:0 50%;">05.01.2019</span>
<span class="t" style="top:569.00px;font-size:12px;color:#000;left:1105.00px;transform:scaleX(0.8957);transform-origin:0 50%;">05.01.2019</span>
<span class="t" style="top:569.00px;font-size:12px;color:#000;left:1201.60px;transform:scaleX(0.9688);transform-origin:0 50%;">TrustedInstaller</span>
<svg style="left:492px;top:589px" width="13" height="16" viewBox="0 0 13 16"><path d="M0.5 0.5H8L11.5 4V15.5H0.5Z" fill="#fdfdfd" stroke="#8f8f8f"/><path d="M8 0.5V4H11.5" fill="none" stroke="#8f8f8f"/><circle cx="5.2" cy="7" r="2.7" fill="#eeeeee" stroke="#8c8c8c" stroke-width="0.9"/><circle cx="5.2" cy="7" r="1" fill="none" stroke="#9a9a9a" stroke-width="0.7"/><circle cx="8" cy="10.6" r="1.9" fill="#cfe3f5" stroke="#7fa6cc" stroke-width="0.9"/><path d="M6.8 8.8L7.6 9.6" stroke="#8c8c8c" stroke-width="1.2"/></svg>
<span class="t" style="top:589.00px;font-size:12px;color:#000;left:512.00px;transform:scaleX(1.0275);transform-origin:0 50%;">edgehtml.dll</span>
<span class="t" style="top:589.00px;font-size:12px;color:#000;left:669.44px;transform:scaleX(0.9150);transform-origin:100% 50%;">21,5 МБ</span>
<span class="t" style="top:589.00px;font-size:12px;color:#000;left:754.44px;transform:scaleX(0.9150);transform-origin:100% 50%;">21,5 МБ</span>
<span class="t" style="top:589.00px;font-size:12px;color:#000;left:847.31px;transform:scaleX(0.9000);transform-origin:100% 50%;">1</span>
<span class="t" style="top:589.00px;font-size:12px;color:#000;left:902.31px;transform:scaleX(0.9000);transform-origin:100% 50%;">0</span>
<div style="left:916px;top:589px;width:81px;height:16px;background:#e8e8e8;border:1px solid #b0b0b0;"></div>
<div style="left:917px;top:590px;width:1.2px;height:14px;background:linear-gradient(90deg,#a4a4fb,#c4c4fd);"></div>
<span class="t" style="top:589.00px;font-size:12px;color:#000;left:943.66px;transform:scaleX(0.9000);transform-origin:50% 50%;">0,6 %</span>
<span class="t" style="top:589.00px;font-size:12px;color:#000;left:1009.50px;transform:scaleX(0.8957);transform-origin:0 50%;">05.01.2019</span>
<span class="t" style="top:589.00px;font-size:12px;color:#000;left:1105.00px;transform:scaleX(0.8957);transform-origin:0 50%;">05.01.2019</span>
<span class="t" style="top:589.00px;font-size:12px;color:#000;left:1201.60px;transform:scaleX(0.9688);transform-origin:0 50%;">TrustedInstaller</span>
<svg style="left:492px;top:609px" width="13" height="16" viewBox="0 0 13 16"><path d="M0.5 0.5H8L11.5 4V15.5H0.5Z" fill="#fdfdfd" stroke="#8f8f8f"/><path d="M8 0.5V4H11.5" fill="none" stroke="#8f8f8f"/><circle cx="5.2" cy="7" r="2.7" fill="#eeeeee" stroke="#8c8c8c" stroke-width="0.9"/><circle cx="5.2" cy="7" r="1" fill="none" stroke="#9a9a9a" stroke-width="0.7"/><circle cx="8" cy="10.6" r="1.9" fill="#cfe3f5" stroke="#7fa6cc" stroke-width="0.9"/><path d="M6.8 8.8L7.6 9.6" stroke="#8c8c8c" stroke-width="1.2"/></svg>
<span class="t" style="top:609.00px;font-size:12px;color:#000;left:512.00px;transform:scaleX(0.9649);transform-origin:0 50%;">shell32.dll</span>
<span class="t" style="top:609.00px;font-size:12px;color:#000;left:669.44px;transform:scaleX(0.9150);transform-origin:100% 50%;">21,2 МБ</span>
<span class="t" style="top:609.00px;font-size:12px;color:#000;left:754.44px;transform:scaleX(0.9150);transform-origin:100% 50%;">21,2 МБ</span>
<span class="t" style="top:609.00px;font-size:12px;color:#000;left:847.31px;transform:scaleX(0.9000);transform-origin:100% 50%;">1</span>
<span class="t" style="top:609.00px;font-size:12px;color:#000;left:902.31px;transform:scaleX(0.9000);transform-origin:100% 50%;">0</span>
<div style="left:916px;top:609px;width:81px;height:16px;background:#e8e8e8;border:1px solid #b0b0b0;"></div>
<div style="left:917px;top:610px;width:1.2px;height:14px;background:linear-gradient(90deg,#a4a4fb,#c4c4fd);"></div>
<span class="t" style="top:609.00px;font-size:12px;color:#000;left:943.66px;transform:scaleX(0.9000);transform-origin:50% 50%;">0,6 %</span>
<span class="t" style="top:609.00px;font-size:12px;color:#000;left:1009.50px;transform:scaleX(0.8957);transform-origin:0 50%;">05.01.2019</span>
<span class="t" style="top:609.00px;font-size:12px;color:#000;left:1105.00px;transform:scaleX(0.8957);transform-origin:0 50%;">05.01.2019</span>
<span class="t" style="top:609.00px;font-size:12px;color:#000;left:1201.60px;transform:scaleX(0.9688);transform-origin:0 50%;">TrustedInstaller</span>
<svg style="left:492px;top:629px" width="13" height="16" viewBox="0 0 13 16"><path d="M0.5 0.5H8L11.5 4V15.5H0.5Z" fill="#fdfdfd" stroke="#8f8f8f"/><path d="M8 0.5V4H11.5" fill="none" stroke="#8f8f8f"/><circle cx="5.2" cy="7" r="2.7" fill="#eeeeee" stroke="#8c8c8c" stroke-width="0.9"/><circle cx="5.2" cy="7" r="1" fill="none" stroke="#9a9a9a" stroke-width="0.7"/><circle cx="8" cy="10.6" r="1.9" fill="#cfe3f5" stroke="#7fa6cc" stroke-width="0.9"/><path d="M6.8 8.8L7.6 9.6" stroke="#8c8c8c" stroke-width="1.2"/></svg>
<span class="t" style="top:629.00px;font-size:12px;color:#000;left:512.00px;transform:scaleX(1.0193);transform-origin:0 50%;">nvwgf2umx.dll</span>
<span class="t" style="top:629.00px;font-size:12px;color:#000;left:669.44px;transform:scaleX(0.9150);transform-origin:100% 50%;">17,5 МБ</span>
<span class="t" style="top:629.00px;font-size:12px;color:#000;left:754.44px;transform:scaleX(0.9150);transform-origin:100% 50%;">17,5 МБ</span>
<span class="t" style="top:629.00px;font-size:12px;color:#000;left:847.31px;transform:scaleX(0.9000);transform-origin:100% 50%;">1</span>
<span class="t" style="top:629.00px;font-size:12px;color:#000;left:902.31px;transform:scaleX(0.9000);transform-origin:100% 50%;">0</span>
<div style="left:916px;top:629px;width:81px;height:16px;background:#e8e8e8;border:1px solid #b0b0b0;"></div>
<div style="left:917px;top:630px;width:1.2px;height:14px;background:linear-gradient(90deg,#a4a4fb,#c4c4fd);"></div>
<span class="t" style="top:629.00px;font-size:12px;color:#000;left:943.66px;transform:scaleX(0.9000);transform-origin:50% 50%;">0,5 %</span>
<span class="t" style="top:629.00px;font-size:12px;color:#000;left:1009.50px;transform:scaleX(0.8957);transform-origin:0 50%;">23.07.2015</span>
<span class="t" style="top:629.00px;font-size:12px;color:#000;left:1105.00px;transform:scaleX(0.8957);transform-origin:0 50%;">16.03.2019</span>
<span class="t" style="top:629.00px;font-size:12px;color:#000;left:1201.60px;">Администраторы</span>
<svg style="left:492px;top:649px" width="13" height="16" viewBox="0 0 13 16"><path d="M0.5 0.5H8L11.5 4V15.5H0.5Z" fill="#fdfdfd" stroke="#8f8f8f"/><path d="M8 0.5V4H11.5" fill="none" stroke="#8f8f8f"/><circle cx="5.2" cy="7" r="2.7" fill="#eeeeee" stroke="#8c8c8c" stroke-width="0.9"/><circle cx="5.2" cy="7" r="1" fill="none" stroke="#9a9a9a" stroke-width="0.7"/><circle cx="8" cy="10.6" r="1.9" fill="#cfe3f5" stroke="#7fa6cc" stroke-width="0.9"/><path d="M6.8 8.8L7.6 9.6" stroke="#8c8c8c" stroke-width="1.2"/></svg>
<span class="t" style="top:649.00px;font-size:12px;color:#000;left:512.00px;transform:scaleX(0.9879);transform-origin:0 50%;">Windows.UI.Xaml.dll</span>
<span class="t" style="top:649.00px;font-size:12px;color:#000;left:669.44px;transform:scaleX(0.9150);transform-origin:100% 50%;">16,4 МБ</span>
<span class="t" style="top:649.00px;font-size:12px;color:#000;left:754.44px;transform:scaleX(0.9150);transform-origin:100% 50%;">16,4 МБ</span>
<span class="t" style="top:649.00px;font-size:12px;color:#000;left:847.31px;transform:scaleX(0.9000);transform-origin:100% 50%;">1</span>
<span class="t" style="top:649.00px;font-size:12px;color:#000;left:902.31px;transform:scaleX(0.9000);transform-origin:100% 50%;">0</span>
<div style="left:916px;top:649px;width:81px;height:16px;background:#e8e8e8;border:1px solid #b0b0b0;"></div>
<div style="left:917px;top:650px;width:1.2px;height:14px;background:linear-gradient(90deg,#a4a4fb,#c4c4fd);"></div>
<span class="t" style="top:649.00px;font-size:12px;color:#000;left:943.66px;transform:scaleX(0.9000);transform-origin:50% 50%;">0,4 %</span>
<span class="t" style="top:649.00px;font-size:12px;color:#000;left:1009.50px;transform:scaleX(0.8957);transform-origin:0 50%;">05.01.2019</span>
<span class="t" style="top:649.00px;font-size:12px;color:#000;left:1105.00px;transform:scaleX(0.8957);transform-origin:0 50%;">05.01.2019</span>
<span class="t" style="top:649.00px;font-size:12px;color:#000;left:1201.60px;transform:scaleX(0.9688);transform-origin:0 50%;">TrustedInstaller</span>
<svg style="left:492px;top:669px" width="13" height="16" viewBox="0 0 13 16"><path d="M0.5 0.5H8L11.5 4V15.5H0.5Z" fill="#fdfdfd" stroke="#8f8f8f"/><path d="M8 0.5V4H11.5" fill="none" stroke="#8f8f8f"/><circle cx="5.2" cy="7" r="2.7" fill="#eeeeee" stroke="#8c8c8c" stroke-width="0.9"/><circle cx="5.2" cy="7" r="1" fill="none" stroke="#9a9a9a" stroke-width="0.7"/><circle cx="8" cy="10.6" r="1.9" fill="#cfe3f5" stroke="#7fa6cc" stroke-width="0.9"/><path d="M6.8 8.8L7.6 9.6" stroke="#8c8c8c" stroke-width="1.2"/></svg>
<span class="t" style="top:669.00px;font-size:12px;color:#000;left:512.00px;transform:scaleX(1.0178);transform-origin:0 50%;">nvopencl.dll</span>
<span class="t" style="top:669.00px;font-size:12px;color:#000;left:669.44px;transform:scaleX(0.9150);transform-origin:100% 50%;">15,4 МБ</span>
<span class="t" style="top:669.00px;font-size:12px;color:#000;left:754.44px;transform:scaleX(0.9150);transform-origin:100% 50%;">15,4 МБ</span>
<span class="t" style="top:669.00px;font-size:12px;color:#000;left:847.31px;transform:scaleX(0.9000);transform-origin:100% 50%;">1</span>
<span class="t" style="top:669.00px;font-size:12px;color:#000;left:902.31px;transform:scaleX(0.9000);transform-origin:100% 50%;">0</span>
<div style="left:916px;top:669px;width:81px;height:16px;background:#e8e8e8;border:1px solid #b0b0b0;"></div>
<div style="left:917px;top:670px;width:1.2px;height:14px;background:linear-gradient(90deg,#a4a4fb,#c4c4fd);"></div>
<span class="t" style="top:669.00px;font-size:12px;color:#000;left:943.66px;transform:scaleX(0.9000);transform-origin:50% 50%;">0,4 %</span>
<span class="t" style="top:669.00px;font-size:12px;color:#000;left:1009.50px;transform:scaleX(0.8957);transform-origin:0 50%;">23.07.2015</span>
<span class="t" style="top:669.00px;font-size:12px;color:#000;left:1105.00px;transform:scaleX(0.8957);transform-origin:0 50%;">16.03.2019</span>
<span class="t" style="top:669.00px;font-size:12px;color:#000;left:1201.60px;">Администраторы</span>
<svg style="left:492px;top:689px" width="13" height="16" viewBox="0 0 13 16"><path d="M0.5 0.5H8L11.5 4V15.5H0.5Z" fill="#fdfdfd" stroke="#8f8f8f"/><path d="M8 0.5V4H11.5" fill="none" stroke="#8f8f8f"/><circle cx="5.2" cy="7" r="2.7" fill="#eeeeee" stroke="#8c8c8c" stroke-width="0.9"/><circle cx="5.2" cy="7" r="1" fill="none" stroke="#9a9a9a" stroke-width="0.7"/><circle cx="8" cy="10.6" r="1.9" fill="#cfe3f5" stroke="#7fa6cc" stroke-width="0.9"/><path d="M6.8 8.8L7.6 9.6" stroke="#8c8c8c" stroke-width="1.2"/></svg>
<span class="t" style="top:689.00px;font-size:12px;color:#000;left:512.00px;transform:scaleX(1.0110);transform-origin:0 50%;">nvd3dumx.dll</span>
<span class="t" style="top:689.00px;font-size:12px;color:#000;left:669.44px;transform:scaleX(0.9150);transform-origin:100% 50%;">15,3 МБ</span>
<span class="t" style="top:689.00px;font-size:12px;color:#000;left:754.44px;transform:scaleX(0.9150);transform-origin:100% 50%;">15,3 МБ</span>
<span class="t" style="top:689.00px;font-size:12px;color:#000;left:847.31px;transform:scaleX(0.9000);transform-origin:100% 50%;">1</span>
<span class="t" style="top:689.00px;font-size:12px;color:#000;left:902.31px;transform:scaleX(0.9000);transform-origin:100% 50%;">0</span>
<div style="left:916px;top:689px;width:81px;height:16px;background:#e8e8e8;border:1px solid #b0b0b0;"></div>
<div style="left:917px;top:690px;width:1.2px;height:14px;background:linear-gradient(90deg,#a4a4fb,#c4c4fd);"></div>
<span class="t" style="top:689.00px;font-size:12px;color:#000;left:943.66px;transform:scaleX(0.9000);transform-origin:50% 50%;">0,4 %</span>
<span class="t" style="top:689.00px;font-size:12px;color:#000;left:1009.50px;transform:scaleX(0.8957);transform-origin:0 50%;">23.07.2015</span>
<span class="t" style="top:689.00px;font-size:12px;color:#000;left:1105.00px;transform:scaleX(0.8957);transform-origin:0 50%;">16.03.2019</span>
<span class="t" style="top:689.00px;font-size:12px;color:#000;left:1201.60px;">Администраторы</span>
<svg style="left:492px;top:709px" width="13" height="16" viewBox="0 0 13 16"><path d="M0.5 0.5H11.5V8.5H12.5V15.5H0.5Z" fill="#fde69b" stroke="#f6d366"/><path d="M10.5 9.5V15" stroke="#f6d366"/></svg>
<span class="t" style="top:709.00px;font-size:12px;color:#000;left:512.00px;transform:scaleX(0.9136);transform-origin:0 50%;">SMI</span>
<span class="t" style="top:709.00px;font-size:12px;color:#000;left:669.44px;transform:scaleX(0.9150);transform-origin:100% 50%;">14,4 МБ</span>
<span class="t" style="top:709.00px;font-size:12px;color:#000;left:754.44px;transform:scaleX(0.9150);transform-origin:100% 50%;">14,4 МБ</span>
<span class="t" style="top:709.00px;font-size:12px;color:#000;left:840.64px;transform:scaleX(0.9000);transform-origin:100% 50%;">10</span>
<span class="t" style="top:709.00px;font-size:12px;color:#000;left:902.31px;transform:scaleX(0.9000);transform-origin:100% 50%;">4</span>
<div style="left:916px;top:709px;width:81px;height:16px;background:#e8e8e8;border:1px solid #b0b0b0;"></div>
<div style="left:917px;top:710px;width:1.2px;height:14px;background:linear-gradient(90deg,#a4a4fb,#c4c4fd);"></div>
<span class="t" style="top:709.00px;font-size:12px;color:#000;left:943.66px;transform:scaleX(0.9000);transform-origin:50% 50%;">0,4 %</span>
<span class="t" style="top:709.00px;font-size:12px;color:#000;left:1009.50px;transform:scaleX(0.8957);transform-origin:0 50%;">16.03.2019</span>
<span class="t" style="top:709.00px;font-size:12px;color:#000;left:1105.00px;transform:scaleX(0.8957);transform-origin:0 50%;">31.03.2019</span>
<span class="t" style="top:709.00px;font-size:12px;color:#000;left:1201.60px;transform:scaleX(0.9688);transform-origin:0 50%;">TrustedInstaller</span>
<div style="left:1404px;top:227px;width:17px;height:501px;background:#f0f0f0;"></div>
<svg style="left:1404px;top:227px" width="17" height="17" viewBox="0 0 17 17"><path d="M4.8 10.7L8.5 7L12.2 10.7" stroke="#505050" stroke-width="1.7" fill="none"/></svg>
<svg style="left:1404px;top:711px" width="17" height="17" viewBox="0 0 17 17"><path d="M4.8 6.3L8.5 10L12.2 6.3" stroke="#505050" stroke-width="1.7" fill="none"/></svg>
<div style="left:1404.5px;top:244px;width:16px;height:17px;background:#cdcdcd;"></div>
<div style="left:1px;top:729px;width:1424px;height:22px;background:#f0f0f0;"></div>
<span class="t" style="top:733.50px;font-size:12px;color:#000;left:4.00px;transform:scaleX(0.9524);transform-origin:0 50%;">Свободно: 90,5 ГБ  (из 111 ГБ)</span>
<div style="left:240px;top:731px;width:1px;height:19px;background:#d7d7d7;"></div>
<span class="t" style="top:733.50px;font-size:12px;color:#000;left:245.00px;transform:scaleX(0.9466);transform-origin:0 50%;">18 944 Файлы</span>
<div style="left:400px;top:731px;width:1px;height:19px;background:#d7d7d7;"></div>
<svg style="left:404px;top:733px" width="17" height="17" viewBox="0 0 17 17"><circle cx="8.5" cy="8.5" r="8" fill="#e8301c"/><path d="M5 5L12 12M12 5L5 12" stroke="#fff" stroke-width="2"/></svg>
<span class="t" style="top:733.50px;font-size:12px;color:#0000ff;left:424.00px;text-decoration:underline;">59 Ошибки</span>
<div style="left:494px;top:731px;width:1px;height:19px;background:#d7d7d7;"></div>
<span class="t" style="top:733.50px;font-size:12px;color:#000;left:499.50px;transform:scaleX(0.9368);transform-origin:0 50%;">4096  Байт на кластер (NTFS)</span>
<svg style="left:1411px;top:738px" width="12" height="12" viewBox="0 0 12 12"><g fill="#b5b5b5"><rect x="8" y="0" width="2" height="2"/><rect x="4" y="4" width="2" height="2"/><rect x="8" y="4" width="2" height="2"/><rect x="0" y="8" width="2" height="2"/><rect x="4" y="8" width="2" height="2"/><rect x="8" y="8" width="2" height="2"/></g></svg>
<div style="left:0px;top:0px;width:1px;height:752px;background:#1c86de;"></div>
<div style="left:1425px;top:0px;width:1px;height:752px;background:#1c86de;"></div>
<div style="left:0px;top:751px;width:1426px;height:1px;background:#1c86de;"></div>
</div>
</body></html>
